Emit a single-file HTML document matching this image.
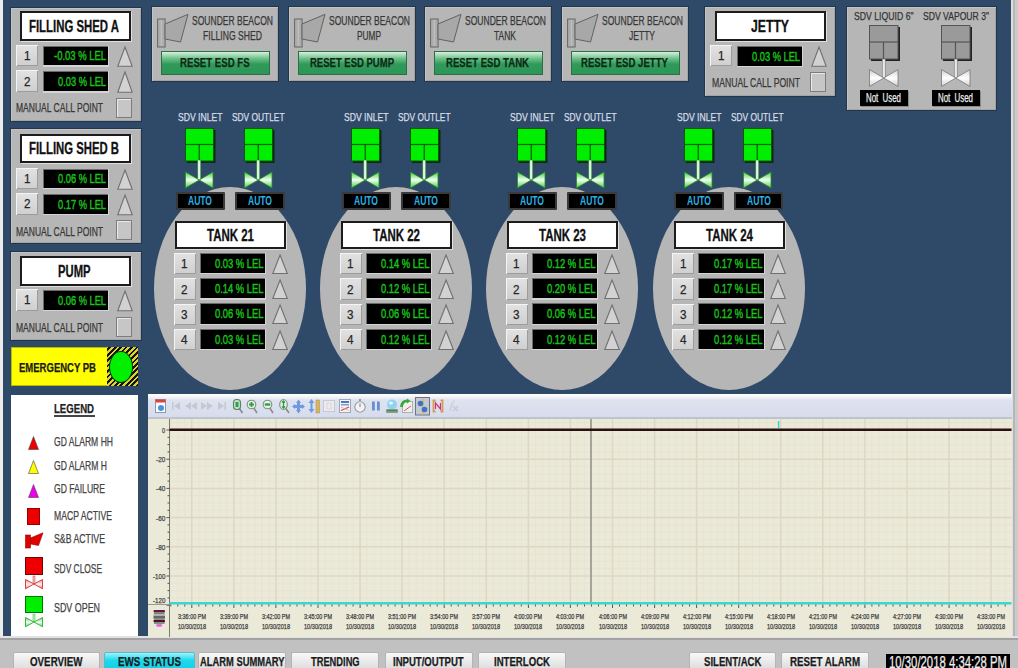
<!DOCTYPE html>
<html><head><meta charset="utf-8"><style>
html,body{margin:0;padding:0;}
body{width:1018px;height:668px;overflow:hidden;position:relative;background:#c1c1c1;font-family:"Liberation Sans",sans-serif;}
.a{position:absolute;}
.t{position:absolute;white-space:nowrap;text-align:left;overflow:visible;}
.t span{display:inline-block;transform-origin:0 50%;white-space:nowrap;}
.t{-webkit-text-stroke:0.25px currentColor;}
svg{overflow:visible;}
#wrap{position:absolute;left:0;top:0;width:1018px;height:668px;overflow:hidden;}
</style></head><body><div id="wrap">
<div class="a" style="left:0;top:0;width:3px;height:636px;background:#ececec"></div>
<div class="a" style="left:3.00px;top:0.00px;width:1008.00px;height:636.00px;background:#2f4968;"></div>
<div class="a" style="left:1011.00px;top:0.00px;width:7.00px;height:636.00px;background:linear-gradient(90deg,#dedede 0,#dedede 2px,#b6b6b6 2px,#b6b6b6 4px,#cbcbcb 4px);"></div>
<div class="a" style="left:0.00px;top:636.00px;width:1018.00px;height:32.00px;background:#c1c1c1;"></div>
<div class="a" style="left:0.00px;top:636.00px;width:1018.00px;height:2.00px;background:#e2e2e2;"></div>
<div class="a" style="left:0.00px;top:638.30px;width:1018.00px;height:1.70px;background:#a2a2a2;"></div>
<div class="a" style="left:10.00px;top:7.00px;width:132.00px;height:115.00px;background:#22354a;"></div>
<div class="a" style="left:11.00px;top:8.00px;width:130.00px;height:113.00px;background:#b6b6b6;box-shadow:inset 1px 1px 0 #c4c4c4, inset -1px -1px 0 #a4a4a4;"></div>
<div class="a" style="left:20.00px;top:11.00px;width:111.00px;height:29.50px;background:#fff;border:2px solid #1c1c1c;box-sizing:border-box;box-shadow:1px 1px 0 #e0e0e0;"></div>
<div class="t" style="left:29.00px;top:17.11px;width:90.00px;height:19.2px;line-height:19.2px;font-size:16px;font-weight:bold;color:#111;-webkit-text-stroke:0.3px #111;"><span style="transform:scaleX(0.7114)">FILLING SHED A</span></div>
<div class="a" style="left:16.00px;top:45.00px;width:22.00px;height:21.00px;background:linear-gradient(#e2e2e2,#cfcfcf);box-shadow:inset 1px 1px 0 #f4f4f4, inset -1px -1px 0 #9c9c9c;"></div>
<div class="t" style="left:23.75px;top:48.17px;width:6.50px;height:15.6px;line-height:15.6px;font-size:13px;font-weight:normal;color:#262626;"><span style="transform:scaleX(0.8990)">1</span></div>
<div class="a" style="left:43.00px;top:46.00px;width:66.00px;height:20.50px;background:#d4d4d4;"></div>
<div class="a" style="left:43.00px;top:46.00px;width:65.00px;height:19.00px;background:#000;box-shadow:inset 1px 1px 0 #6a6a6a;"></div>
<div class="t" style="left:54.00px;top:48.47px;width:52.00px;height:15.6px;line-height:15.6px;font-size:13px;font-weight:normal;color:#1ac21a;-webkit-text-stroke:0.45px #1ac21a;"><span style="transform:scaleX(0.7268)">-0.03 % LEL</span></div>
<svg class="a" style="left:117.00px;top:46.00px" width="16" height="21" viewBox="0 0 16 21"><polygon points="8.0,1 15.2,20.2 0.8,20.2" fill="#d2d2d2" stroke="#707070" stroke-width="1.1"/></svg>
<div class="a" style="left:16.00px;top:70.00px;width:22.00px;height:22.00px;background:linear-gradient(#e2e2e2,#cfcfcf);box-shadow:inset 1px 1px 0 #f4f4f4, inset -1px -1px 0 #9c9c9c;"></div>
<div class="t" style="left:23.75px;top:73.67px;width:6.50px;height:15.6px;line-height:15.6px;font-size:13px;font-weight:normal;color:#262626;"><span style="transform:scaleX(0.8990)">2</span></div>
<div class="a" style="left:43.00px;top:71.00px;width:66.00px;height:21.50px;background:#d4d4d4;"></div>
<div class="a" style="left:43.00px;top:71.00px;width:65.00px;height:20.00px;background:#000;box-shadow:inset 1px 1px 0 #6a6a6a;"></div>
<div class="t" style="left:58.00px;top:73.97px;width:48.00px;height:15.6px;line-height:15.6px;font-size:13px;font-weight:normal;color:#1ac21a;-webkit-text-stroke:0.45px #1ac21a;"><span style="transform:scaleX(0.7141)">0.03 % LEL</span></div>
<svg class="a" style="left:117.00px;top:71.00px" width="16" height="22" viewBox="0 0 16 22"><polygon points="8.0,1 15.2,21.2 0.8,21.2" fill="#d2d2d2" stroke="#707070" stroke-width="1.1"/></svg>
<div class="t" style="left:16.00px;top:101.27px;width:87.00px;height:14.4px;line-height:14.4px;font-size:12px;font-weight:normal;color:#363636;"><span style="transform:scaleX(0.7103)">MANUAL CALL POINT</span></div>
<div class="a" style="left:116.00px;top:98.00px;width:16.00px;height:20.00px;background:#c6c6c6;border:1px solid #7c7c7c;box-sizing:border-box;box-shadow:inset 1px 1px 0 #e8e8e8;"></div>
<div class="a" style="left:10.00px;top:128.00px;width:132.00px;height:116.00px;background:#22354a;"></div>
<div class="a" style="left:11.00px;top:129.00px;width:130.00px;height:114.00px;background:#b6b6b6;box-shadow:inset 1px 1px 0 #c4c4c4, inset -1px -1px 0 #a4a4a4;"></div>
<div class="a" style="left:20.00px;top:133.50px;width:111.00px;height:29.00px;background:#fff;border:2px solid #1c1c1c;box-sizing:border-box;box-shadow:1px 1px 0 #e0e0e0;"></div>
<div class="t" style="left:29.00px;top:139.36px;width:90.00px;height:19.2px;line-height:19.2px;font-size:16px;font-weight:bold;color:#111;-webkit-text-stroke:0.3px #111;"><span style="transform:scaleX(0.7080)">FILLING SHED B</span></div>
<div class="a" style="left:16.00px;top:167.50px;width:22.00px;height:21.00px;background:linear-gradient(#e2e2e2,#cfcfcf);box-shadow:inset 1px 1px 0 #f4f4f4, inset -1px -1px 0 #9c9c9c;"></div>
<div class="t" style="left:23.75px;top:170.67px;width:6.50px;height:15.6px;line-height:15.6px;font-size:13px;font-weight:normal;color:#262626;"><span style="transform:scaleX(0.8990)">1</span></div>
<div class="a" style="left:43.00px;top:168.50px;width:66.00px;height:20.50px;background:#d4d4d4;"></div>
<div class="a" style="left:43.00px;top:168.50px;width:65.00px;height:19.00px;background:#000;box-shadow:inset 1px 1px 0 #6a6a6a;"></div>
<div class="t" style="left:58.00px;top:170.97px;width:48.00px;height:15.6px;line-height:15.6px;font-size:13px;font-weight:normal;color:#1ac21a;-webkit-text-stroke:0.45px #1ac21a;"><span style="transform:scaleX(0.7141)">0.06 % LEL</span></div>
<svg class="a" style="left:117.00px;top:168.50px" width="16" height="21.0" viewBox="0 0 16 21.0"><polygon points="8.0,1 15.2,20.2 0.8,20.2" fill="#d2d2d2" stroke="#707070" stroke-width="1.1"/></svg>
<div class="a" style="left:16.00px;top:193.00px;width:22.00px;height:21.50px;background:linear-gradient(#e2e2e2,#cfcfcf);box-shadow:inset 1px 1px 0 #f4f4f4, inset -1px -1px 0 #9c9c9c;"></div>
<div class="t" style="left:23.75px;top:196.42px;width:6.50px;height:15.6px;line-height:15.6px;font-size:13px;font-weight:normal;color:#262626;"><span style="transform:scaleX(0.8990)">2</span></div>
<div class="a" style="left:43.00px;top:194.00px;width:66.00px;height:21.00px;background:#d4d4d4;"></div>
<div class="a" style="left:43.00px;top:194.00px;width:65.00px;height:19.50px;background:#000;box-shadow:inset 1px 1px 0 #6a6a6a;"></div>
<div class="t" style="left:58.00px;top:196.72px;width:48.00px;height:15.6px;line-height:15.6px;font-size:13px;font-weight:normal;color:#1ac21a;-webkit-text-stroke:0.45px #1ac21a;"><span style="transform:scaleX(0.7141)">0.17 % LEL</span></div>
<svg class="a" style="left:117.00px;top:194.00px" width="16" height="21.5" viewBox="0 0 16 21.5"><polygon points="8.0,1 15.2,20.7 0.8,20.7" fill="#d2d2d2" stroke="#707070" stroke-width="1.1"/></svg>
<div class="t" style="left:16.00px;top:224.77px;width:87.00px;height:14.4px;line-height:14.4px;font-size:12px;font-weight:normal;color:#363636;"><span style="transform:scaleX(0.7103)">MANUAL CALL POINT</span></div>
<div class="a" style="left:116.00px;top:220.00px;width:16.00px;height:20.00px;background:#c6c6c6;border:1px solid #7c7c7c;box-sizing:border-box;box-shadow:inset 1px 1px 0 #e8e8e8;"></div>
<div class="a" style="left:10.00px;top:251.00px;width:132.00px;height:89.50px;background:#22354a;"></div>
<div class="a" style="left:11.00px;top:252.00px;width:130.00px;height:87.50px;background:#b6b6b6;box-shadow:inset 1px 1px 0 #c4c4c4, inset -1px -1px 0 #a4a4a4;"></div>
<div class="a" style="left:20.00px;top:256.00px;width:111.00px;height:29.50px;background:#fff;border:2px solid #1c1c1c;box-sizing:border-box;box-shadow:1px 1px 0 #e0e0e0;"></div>
<div class="t" style="left:58.25px;top:262.11px;width:32.50px;height:19.2px;line-height:19.2px;font-size:16px;font-weight:bold;color:#111;-webkit-text-stroke:0.3px #111;"><span style="transform:scaleX(0.7030)">PUMP</span></div>
<div class="a" style="left:16.00px;top:289.00px;width:22.00px;height:21.50px;background:linear-gradient(#e2e2e2,#cfcfcf);box-shadow:inset 1px 1px 0 #f4f4f4, inset -1px -1px 0 #9c9c9c;"></div>
<div class="t" style="left:23.75px;top:292.42px;width:6.50px;height:15.6px;line-height:15.6px;font-size:13px;font-weight:normal;color:#262626;"><span style="transform:scaleX(0.8990)">1</span></div>
<div class="a" style="left:43.00px;top:290.00px;width:66.00px;height:21.00px;background:#d4d4d4;"></div>
<div class="a" style="left:43.00px;top:290.00px;width:65.00px;height:19.50px;background:#000;box-shadow:inset 1px 1px 0 #6a6a6a;"></div>
<div class="t" style="left:58.00px;top:292.72px;width:48.00px;height:15.6px;line-height:15.6px;font-size:13px;font-weight:normal;color:#1ac21a;-webkit-text-stroke:0.45px #1ac21a;"><span style="transform:scaleX(0.7141)">0.06 % LEL</span></div>
<svg class="a" style="left:117.00px;top:290.00px" width="16" height="21.5" viewBox="0 0 16 21.5"><polygon points="8.0,1 15.2,20.7 0.8,20.7" fill="#d2d2d2" stroke="#707070" stroke-width="1.1"/></svg>
<div class="t" style="left:16.00px;top:320.77px;width:87.00px;height:14.4px;line-height:14.4px;font-size:12px;font-weight:normal;color:#363636;"><span style="transform:scaleX(0.7103)">MANUAL CALL POINT</span></div>
<div class="a" style="left:116.00px;top:317.00px;width:16.00px;height:20.00px;background:#c6c6c6;border:1px solid #7c7c7c;box-sizing:border-box;box-shadow:inset 1px 1px 0 #e8e8e8;"></div>
<div class="a" style="left:11.00px;top:347.40px;width:127.00px;height:38.90px;background:#ffff00;box-shadow:inset 0 0 0 1px #b8b800;"></div>
<div class="a" style="left:106.70px;top:347.40px;width:31.30px;height:38.90px;background:repeating-linear-gradient(-45deg,#141414 0,#141414 1.9px,#dcd428 1.9px,#dcd428 3.85px);"></div>
<div class="a" style="left:110.2px;top:351.7px;width:21.8px;height:30.3px;border-radius:50%;background:#00f000;box-shadow:0 0 0 1px #0a3a0a;"></div>
<div class="t" style="left:18.70px;top:359.97px;width:77.00px;height:15.6px;line-height:15.6px;font-size:13px;font-weight:bold;color:#1a1a1a;"><span style="transform:scaleX(0.7317)">EMERGENCY PB</span></div>
<div class="a" style="left:11.00px;top:395.00px;width:126.50px;height:241.00px;background:#fff;"></div>
<div class="t" style="left:54.00px;top:402.27px;width:40.00px;height:14.4px;line-height:14.4px;font-size:12px;font-weight:bold;color:#222;"><span style="transform:scaleX(0.7999)">LEGEND</span></div>
<div class="a" style="left:54.00px;top:415.00px;width:40.50px;height:1.50px;background:#444;"></div>
<div class="t" style="left:54.00px;top:435.27px;width:59.00px;height:14.4px;line-height:14.4px;font-size:12px;font-weight:normal;color:#444;"><span style="transform:scaleX(0.7136)">GD ALARM HH</span></div>
<div class="t" style="left:54.00px;top:459.27px;width:53.00px;height:14.4px;line-height:14.4px;font-size:12px;font-weight:normal;color:#444;"><span style="transform:scaleX(0.7160)">GD ALARM H</span></div>
<div class="t" style="left:54.00px;top:482.27px;width:51.00px;height:14.4px;line-height:14.4px;font-size:12px;font-weight:normal;color:#444;"><span style="transform:scaleX(0.7148)">GD FAILURE</span></div>
<div class="t" style="left:54.00px;top:509.27px;width:58.00px;height:14.4px;line-height:14.4px;font-size:12px;font-weight:normal;color:#444;"><span style="transform:scaleX(0.7208)">MACP ACTIVE</span></div>
<div class="t" style="left:54.00px;top:531.77px;width:51.00px;height:14.4px;line-height:14.4px;font-size:12px;font-weight:normal;color:#444;"><span style="transform:scaleX(0.7283)">S&amp;B ACTIVE</span></div>
<div class="t" style="left:54.00px;top:562.27px;width:48.00px;height:14.4px;line-height:14.4px;font-size:12px;font-weight:normal;color:#444;"><span style="transform:scaleX(0.6988)">SDV CLOSE</span></div>
<div class="t" style="left:54.00px;top:600.77px;width:46.00px;height:14.4px;line-height:14.4px;font-size:12px;font-weight:normal;color:#444;"><span style="transform:scaleX(0.7417)">SDV OPEN</span></div>
<svg class="a" style="left:28.00px;top:436.00px" width="11" height="14" viewBox="0 0 11 14"><polygon points="5.5,0.5 10.5,13.5 0.5,13.5" fill="#ee0000" stroke="#444" stroke-width="0.6"/></svg>
<svg class="a" style="left:28.00px;top:460.00px" width="11" height="14" viewBox="0 0 11 14"><polygon points="5.5,0.5 10.5,13.5 0.5,13.5" fill="#ffff00" stroke="#444" stroke-width="0.6"/></svg>
<svg class="a" style="left:28.00px;top:483.50px" width="11" height="14" viewBox="0 0 11 14"><polygon points="5.5,0.5 10.5,13.5 0.5,13.5" fill="#ee00ee" stroke="#444" stroke-width="0.6"/></svg>
<div class="a" style="left:27.20px;top:508.00px;width:12.60px;height:16.50px;background:#ee0000;border:1px solid #900;box-sizing:border-box;"></div>
<svg class="a" style="left:25.00px;top:532.00px" width="19" height="17" viewBox="0 0 19 17"><rect x="0.5" y="3" width="5" height="13" fill="#e00000" stroke="#900" stroke-width="0.6"/><polygon points="5.5,6 18,0.8 13.5,13.5 5.5,12" fill="#e00000" stroke="#900" stroke-width="0.6"/></svg>
<div class="a" style="left:25.20px;top:557.40px;width:17.60px;height:18.10px;background:#ee0000;border:1px solid #700;box-sizing:border-box;"></div>
<svg class="a" style="left:25.00px;top:576.00px" width="18" height="14" viewBox="0 0 18 14"><defs><linearGradient id="lgr" x1="0" y1="0" x2="0" y2="1"><stop offset="0" stop-color="#f08080"/><stop offset="0.5" stop-color="#fff0f0"/><stop offset="1" stop-color="#f08080"/></linearGradient></defs><rect x="8" y="0" width="2" height="8" fill="#f0c0c0" stroke="#d04040" stroke-width="0.5"/><polygon points="0.5,3.5 9,8 0.5,12.8" fill="url(#lgr)" stroke="#d83030" stroke-width="0.9"/><polygon points="17.5,3.5 9,8 17.5,12.8" fill="url(#lgr)" stroke="#d83030" stroke-width="0.9"/></svg>
<div class="a" style="left:25.20px;top:595.70px;width:17.60px;height:17.80px;background:#00ee00;border:1px solid #070;box-sizing:border-box;"></div>
<svg class="a" style="left:25.00px;top:614.00px" width="18" height="14" viewBox="0 0 18 14"><defs><linearGradient id="lgg" x1="0" y1="0" x2="0" y2="1"><stop offset="0" stop-color="#60d060"/><stop offset="0.5" stop-color="#f0fff0"/><stop offset="1" stop-color="#60d060"/></linearGradient></defs><rect x="8" y="0" width="2" height="8" fill="#c0f0c0" stroke="#40b040" stroke-width="0.5"/><polygon points="0.5,3.5 9,8 0.5,12.8" fill="url(#lgg)" stroke="#30b030" stroke-width="0.9"/><polygon points="17.5,3.5 9,8 17.5,12.8" fill="url(#lgg)" stroke="#30b030" stroke-width="0.9"/></svg>
<div class="a" style="left:151.00px;top:5.50px;width:127.50px;height:76.50px;background:#22354a;"></div>
<div class="a" style="left:152.00px;top:6.50px;width:125.50px;height:74.50px;background:#b6b6b6;box-shadow:inset 1px 1px 0 #c4c4c4, inset -1px -1px 0 #a4a4a4;"></div>
<svg class="a" style="left:157.00px;top:13.00px" width="33" height="36" viewBox="0 0 33 36"><rect x="0.6" y="6" width="7.5" height="28" fill="#adadad" stroke="#666" stroke-width="1"/><line x1="4.3" y1="7" x2="4.3" y2="33" stroke="#c4c4c4" stroke-width="1"/><polygon points="8,11 31,1.3 23.5,29 8,26" fill="#a8a8a8" stroke="#626262" stroke-width="1"/></svg>
<div class="t" style="left:192.00px;top:14.27px;width:81.00px;height:14.4px;line-height:14.4px;font-size:12px;font-weight:normal;color:#363636;"><span style="transform:scaleX(0.7104)">SOUNDER BEACON</span></div>
<div class="t" style="left:202.80px;top:28.57px;width:59.00px;height:14.4px;line-height:14.4px;font-size:12px;font-weight:normal;color:#363636;"><span style="transform:scaleX(0.7193)">FILLING SHED</span></div>
<div class="a" style="left:161.40px;top:51.30px;width:109.00px;height:23.50px;background:linear-gradient(#d8f0dc 0%,#6cc08a 30%,#2f9a5a 55%,#2c9658 100%);border:1px solid #2d6e45;box-sizing:border-box;"></div>
<div class="t" style="left:179.85px;top:54.97px;width:69.70px;height:15.6px;line-height:15.6px;font-size:13px;font-weight:bold;color:#0e2a16;"><span style="transform:scaleX(0.7422)">RESET ESD FS</span></div>
<div class="a" style="left:288.00px;top:5.50px;width:127.50px;height:76.50px;background:#22354a;"></div>
<div class="a" style="left:289.00px;top:6.50px;width:125.50px;height:74.50px;background:#b6b6b6;box-shadow:inset 1px 1px 0 #c4c4c4, inset -1px -1px 0 #a4a4a4;"></div>
<svg class="a" style="left:294.00px;top:13.00px" width="33" height="36" viewBox="0 0 33 36"><rect x="0.6" y="6" width="7.5" height="28" fill="#adadad" stroke="#666" stroke-width="1"/><line x1="4.3" y1="7" x2="4.3" y2="33" stroke="#c4c4c4" stroke-width="1"/><polygon points="8,11 31,1.3 23.5,29 8,26" fill="#a8a8a8" stroke="#626262" stroke-width="1"/></svg>
<div class="t" style="left:329.00px;top:14.27px;width:81.00px;height:14.4px;line-height:14.4px;font-size:12px;font-weight:normal;color:#363636;"><span style="transform:scaleX(0.7104)">SOUNDER BEACON</span></div>
<div class="t" style="left:356.50px;top:28.57px;width:24.00px;height:14.4px;line-height:14.4px;font-size:12px;font-weight:normal;color:#363636;"><span style="transform:scaleX(0.6922)">PUMP</span></div>
<div class="a" style="left:298.40px;top:51.30px;width:109.00px;height:23.50px;background:linear-gradient(#d8f0dc 0%,#6cc08a 30%,#2f9a5a 55%,#2c9658 100%);border:1px solid #2d6e45;box-sizing:border-box;"></div>
<div class="t" style="left:309.70px;top:54.97px;width:84.00px;height:15.6px;line-height:15.6px;font-size:13px;font-weight:bold;color:#0e2a16;"><span style="transform:scaleX(0.7313)">RESET ESD PUMP</span></div>
<div class="a" style="left:424.00px;top:5.50px;width:127.50px;height:76.50px;background:#22354a;"></div>
<div class="a" style="left:425.00px;top:6.50px;width:125.50px;height:74.50px;background:#b6b6b6;box-shadow:inset 1px 1px 0 #c4c4c4, inset -1px -1px 0 #a4a4a4;"></div>
<svg class="a" style="left:430.00px;top:13.00px" width="33" height="36" viewBox="0 0 33 36"><rect x="0.6" y="6" width="7.5" height="28" fill="#adadad" stroke="#666" stroke-width="1"/><line x1="4.3" y1="7" x2="4.3" y2="33" stroke="#c4c4c4" stroke-width="1"/><polygon points="8,11 31,1.3 23.5,29 8,26" fill="#a8a8a8" stroke="#626262" stroke-width="1"/></svg>
<div class="t" style="left:465.00px;top:14.27px;width:81.00px;height:14.4px;line-height:14.4px;font-size:12px;font-weight:normal;color:#363636;"><span style="transform:scaleX(0.7104)">SOUNDER BEACON</span></div>
<div class="t" style="left:494.30px;top:28.57px;width:22.00px;height:14.4px;line-height:14.4px;font-size:12px;font-weight:normal;color:#363636;"><span style="transform:scaleX(0.7071)">TANK</span></div>
<div class="a" style="left:434.40px;top:51.30px;width:109.00px;height:23.50px;background:linear-gradient(#d8f0dc 0%,#6cc08a 30%,#2f9a5a 55%,#2c9658 100%);border:1px solid #2d6e45;box-sizing:border-box;"></div>
<div class="t" style="left:446.20px;top:54.97px;width:83.00px;height:15.6px;line-height:15.6px;font-size:13px;font-weight:bold;color:#0e2a16;"><span style="transform:scaleX(0.7382)">RESET ESD TANK</span></div>
<div class="a" style="left:561.00px;top:5.50px;width:127.50px;height:76.50px;background:#22354a;"></div>
<div class="a" style="left:562.00px;top:6.50px;width:125.50px;height:74.50px;background:#b6b6b6;box-shadow:inset 1px 1px 0 #c4c4c4, inset -1px -1px 0 #a4a4a4;"></div>
<svg class="a" style="left:567.00px;top:13.00px" width="33" height="36" viewBox="0 0 33 36"><rect x="0.6" y="6" width="7.5" height="28" fill="#adadad" stroke="#666" stroke-width="1"/><line x1="4.3" y1="7" x2="4.3" y2="33" stroke="#c4c4c4" stroke-width="1"/><polygon points="8,11 31,1.3 23.5,29 8,26" fill="#a8a8a8" stroke="#626262" stroke-width="1"/></svg>
<div class="t" style="left:602.00px;top:14.27px;width:81.00px;height:14.4px;line-height:14.4px;font-size:12px;font-weight:normal;color:#363636;"><span style="transform:scaleX(0.7104)">SOUNDER BEACON</span></div>
<div class="t" style="left:628.50px;top:28.57px;width:26.00px;height:14.4px;line-height:14.4px;font-size:12px;font-weight:normal;color:#363636;"><span style="transform:scaleX(0.7090)">JETTY</span></div>
<div class="a" style="left:571.40px;top:51.30px;width:109.00px;height:23.50px;background:linear-gradient(#d8f0dc 0%,#6cc08a 30%,#2f9a5a 55%,#2c9658 100%);border:1px solid #2d6e45;box-sizing:border-box;"></div>
<div class="t" style="left:581.20px;top:54.97px;width:87.00px;height:15.6px;line-height:15.6px;font-size:13px;font-weight:bold;color:#0e2a16;"><span style="transform:scaleX(0.7388)">RESET ESD JETTY</span></div>
<div class="a" style="left:704.00px;top:6.00px;width:132.00px;height:90.50px;background:#22354a;"></div>
<div class="a" style="left:705.00px;top:7.00px;width:130.00px;height:88.50px;background:#b6b6b6;box-shadow:inset 1px 1px 0 #c4c4c4, inset -1px -1px 0 #a4a4a4;"></div>
<div class="a" style="left:714.50px;top:11.00px;width:111.00px;height:29.50px;background:#fff;border:2px solid #1c1c1c;box-sizing:border-box;box-shadow:1px 1px 0 #e0e0e0;"></div>
<div class="t" style="left:751.00px;top:17.11px;width:38.00px;height:19.2px;line-height:19.2px;font-size:16px;font-weight:bold;color:#111;-webkit-text-stroke:0.3px #111;"><span style="transform:scaleX(0.7632)">JETTY</span></div>
<div class="a" style="left:710.00px;top:44.80px;width:22.00px;height:21.40px;background:linear-gradient(#e2e2e2,#cfcfcf);box-shadow:inset 1px 1px 0 #f4f4f4, inset -1px -1px 0 #9c9c9c;"></div>
<div class="t" style="left:717.75px;top:48.17px;width:6.50px;height:15.6px;line-height:15.6px;font-size:13px;font-weight:normal;color:#262626;"><span style="transform:scaleX(0.8990)">1</span></div>
<div class="a" style="left:737.00px;top:46.00px;width:66.00px;height:21.00px;background:#d4d4d4;"></div>
<div class="a" style="left:737.00px;top:46.00px;width:65.00px;height:19.50px;background:#000;box-shadow:inset 1px 1px 0 #6a6a6a;"></div>
<div class="t" style="left:752.00px;top:48.72px;width:48.00px;height:15.6px;line-height:15.6px;font-size:13px;font-weight:normal;color:#1ac21a;-webkit-text-stroke:0.45px #1ac21a;"><span style="transform:scaleX(0.7141)">0.03 % LEL</span></div>
<svg class="a" style="left:811.00px;top:46.00px" width="16" height="21" viewBox="0 0 16 21"><polygon points="8.0,1 15.2,20.2 0.8,20.2" fill="#d2d2d2" stroke="#707070" stroke-width="1.1"/></svg>
<div class="t" style="left:711.50px;top:75.77px;width:88.00px;height:14.4px;line-height:14.4px;font-size:12px;font-weight:normal;color:#363636;"><span style="transform:scaleX(0.7185)">MANUAL CALL POINT</span></div>
<div class="a" style="left:810.00px;top:71.50px;width:16.00px;height:20.00px;background:#c6c6c6;border:1px solid #7c7c7c;box-sizing:border-box;box-shadow:inset 1px 1px 0 #e8e8e8;"></div>
<div class="a" style="left:846.00px;top:6.00px;width:151.00px;height:105.00px;background:#22354a;"></div>
<div class="a" style="left:847.00px;top:7.00px;width:149.00px;height:103.00px;background:#b6b6b6;box-shadow:inset 1px 1px 0 #c4c4c4, inset -1px -1px 0 #a4a4a4;"></div>
<div class="t" style="left:854.20px;top:9.97px;width:59.60px;height:13.8px;line-height:13.8px;font-size:11.5px;font-weight:normal;color:#333;"><span style="transform:scaleX(0.7558)">SDV LIQUID 6"</span></div>
<div class="t" style="left:923.00px;top:9.97px;width:66.00px;height:13.8px;line-height:13.8px;font-size:11.5px;font-weight:normal;color:#333;"><span style="transform:scaleX(0.7481)">SDV VAPOUR 3"</span></div>
<svg class="a" style="left:868.50px;top:24.50px" width="31" height="36" viewBox="0 0 31 36"><rect x="2" y="2" width="29" height="34" fill="#222"/><rect x="0.5" y="0.5" width="28.5" height="33.5" fill="#9a9a9a" stroke="#555" stroke-width="1"/><line x1="0.5" y1="17.0" x2="29" y2="17.0" stroke="#555" stroke-width="1.2"/><line x1="14.5" y1="17.0" x2="14.5" y2="34" stroke="#555" stroke-width="1.2"/></svg>
<svg class="a" style="left:868.50px;top:58.50px" width="29.5" height="28" viewBox="0 0 29.5 28"><defs><linearGradient id="g8685585" x1="0" y1="0" x2="0" y2="1"><stop offset="0" stop-color="#d0d0d0"/><stop offset="0.5" stop-color="#ffffff"/><stop offset="1" stop-color="#d0d0d0"/></linearGradient></defs><rect x="13.25" y="0" width="3" height="19.0" fill="#e8e8e8" stroke="#777" stroke-width="0.6"/><polygon points="0.5,10.5 14.75,19.0 0.5,27.5" fill="url(#g8685585)" stroke="#777" stroke-width="0.8"/><polygon points="29.0,10.5 14.75,19.0 29.0,27.5" fill="url(#g8685585)" stroke="#777" stroke-width="0.8"/></svg>
<div class="a" style="left:859.50px;top:89.80px;width:48.00px;height:16.20px;background:#000;box-shadow:1px 1px 0 #888;"></div>
<div class="t" style="left:866.00px;top:91.27px;width:35.00px;height:14.4px;line-height:14.4px;font-size:12px;font-weight:normal;color:#f0f0f0;"><span style="transform:scaleX(0.6560)">Not&nbsp; Used</span></div>
<svg class="a" style="left:940.50px;top:24.50px" width="31" height="36" viewBox="0 0 31 36"><rect x="2" y="2" width="29" height="34" fill="#222"/><rect x="0.5" y="0.5" width="28.5" height="33.5" fill="#9a9a9a" stroke="#555" stroke-width="1"/><line x1="0.5" y1="17.0" x2="29" y2="17.0" stroke="#555" stroke-width="1.2"/><line x1="14.5" y1="17.0" x2="14.5" y2="34" stroke="#555" stroke-width="1.2"/></svg>
<svg class="a" style="left:940.50px;top:58.50px" width="29.5" height="28" viewBox="0 0 29.5 28"><defs><linearGradient id="g9405585" x1="0" y1="0" x2="0" y2="1"><stop offset="0" stop-color="#d0d0d0"/><stop offset="0.5" stop-color="#ffffff"/><stop offset="1" stop-color="#d0d0d0"/></linearGradient></defs><rect x="13.25" y="0" width="3" height="19.0" fill="#e8e8e8" stroke="#777" stroke-width="0.6"/><polygon points="0.5,10.5 14.75,19.0 0.5,27.5" fill="url(#g9405585)" stroke="#777" stroke-width="0.8"/><polygon points="29.0,10.5 14.75,19.0 29.0,27.5" fill="url(#g9405585)" stroke="#777" stroke-width="0.8"/></svg>
<div class="a" style="left:931.50px;top:89.80px;width:48.00px;height:16.20px;background:#000;box-shadow:1px 1px 0 #888;"></div>
<div class="t" style="left:938.00px;top:91.27px;width:35.00px;height:14.4px;line-height:14.4px;font-size:12px;font-weight:normal;color:#f0f0f0;"><span style="transform:scaleX(0.6560)">Not&nbsp; Used</span></div>
<div class="a" style="left:154.00px;top:186.5px;width:152px;height:203.5px;border-radius:50%;background:#b6b6b6;"></div>
<div class="t" style="left:178.25px;top:111.07px;width:44.50px;height:13.8px;line-height:13.8px;font-size:11.5px;font-weight:normal;color:#d8dee6;"><span style="transform:scaleX(0.7487)">SDV INLET</span></div>
<div class="t" style="left:232.25px;top:111.07px;width:52.50px;height:13.8px;line-height:13.8px;font-size:11.5px;font-weight:normal;color:#d8dee6;"><span style="transform:scaleX(0.7271)">SDV OUTLET</span></div>
<svg class="a" style="left:185.40px;top:128.40px" width="30.5" height="35" viewBox="0 0 30.5 35"><rect x="2" y="2" width="28.5" height="33" fill="#0c2a10"/><rect x="0.5" y="0.5" width="28.0" height="32.5" fill="#00ee00" stroke="#0a5a0a" stroke-width="1"/><line x1="0.5" y1="16.5" x2="28.5" y2="16.5" stroke="#0a5a0a" stroke-width="1.2"/><line x1="14.25" y1="16.5" x2="14.25" y2="33" stroke="#0a5a0a" stroke-width="1.2"/></svg>
<svg class="a" style="left:185.40px;top:160.00px" width="28.5" height="28.5" viewBox="0 0 28.5 28.5"><defs><linearGradient id="g18541600" x1="0" y1="0" x2="0" y2="1"><stop offset="0" stop-color="#40d040"/><stop offset="0.5" stop-color="#f0fff0"/><stop offset="1" stop-color="#40d040"/></linearGradient></defs><rect x="12.75" y="0" width="3" height="20.0" fill="#e0f5e0" stroke="#2a8a2a" stroke-width="0.6"/><polygon points="0.5,12.0 14.25,20.0 0.5,28.0" fill="url(#g18541600)" stroke="#2a8a2a" stroke-width="0.8"/><polygon points="28.0,12.0 14.25,20.0 28.0,28.0" fill="url(#g18541600)" stroke="#2a8a2a" stroke-width="0.8"/></svg>
<svg class="a" style="left:244.40px;top:128.40px" width="30.5" height="35" viewBox="0 0 30.5 35"><rect x="2" y="2" width="28.5" height="33" fill="#0c2a10"/><rect x="0.5" y="0.5" width="28.0" height="32.5" fill="#00ee00" stroke="#0a5a0a" stroke-width="1"/><line x1="0.5" y1="16.5" x2="28.5" y2="16.5" stroke="#0a5a0a" stroke-width="1.2"/><line x1="14.25" y1="16.5" x2="14.25" y2="33" stroke="#0a5a0a" stroke-width="1.2"/></svg>
<svg class="a" style="left:244.40px;top:160.00px" width="28.5" height="28.5" viewBox="0 0 28.5 28.5"><defs><linearGradient id="g24441600" x1="0" y1="0" x2="0" y2="1"><stop offset="0" stop-color="#40d040"/><stop offset="0.5" stop-color="#f0fff0"/><stop offset="1" stop-color="#40d040"/></linearGradient></defs><rect x="12.75" y="0" width="3" height="20.0" fill="#e0f5e0" stroke="#2a8a2a" stroke-width="0.6"/><polygon points="0.5,12.0 14.25,20.0 0.5,28.0" fill="url(#g24441600)" stroke="#2a8a2a" stroke-width="0.8"/><polygon points="28.0,12.0 14.25,20.0 28.0,28.0" fill="url(#g24441600)" stroke="#2a8a2a" stroke-width="0.8"/></svg>
<div class="a" style="left:175.70px;top:191.60px;width:49.30px;height:18.40px;background:#000;border:2px solid #3a3a3a;box-sizing:border-box;border-radius:1px;"></div>
<div class="t" style="left:188.30px;top:194.27px;width:24.00px;height:14.4px;line-height:14.4px;font-size:12px;font-weight:bold;color:#2ab0e6;-webkit-text-stroke:0;"><span style="transform:scaleX(0.7105)">AUTO</span></div>
<div class="a" style="left:235.30px;top:191.60px;width:49.30px;height:18.40px;background:#000;border:2px solid #3a3a3a;box-sizing:border-box;border-radius:1px;"></div>
<div class="t" style="left:247.90px;top:194.27px;width:24.00px;height:14.4px;line-height:14.4px;font-size:12px;font-weight:bold;color:#2ab0e6;-webkit-text-stroke:0;"><span style="transform:scaleX(0.7105)">AUTO</span></div>
<div class="a" style="left:175.00px;top:220.50px;width:111.00px;height:28.50px;background:#fff;border:2px solid #1c1c1c;box-sizing:border-box;box-shadow:1px 1px 0 #e0e0e0;"></div>
<div class="t" style="left:207.00px;top:226.11px;width:47.00px;height:19.2px;line-height:19.2px;font-size:16px;font-weight:bold;color:#111;-webkit-text-stroke:0.3px #111;"><span style="transform:scaleX(0.7176)">TANK 21</span></div>
<div class="a" style="left:173.50px;top:253.00px;width:22.20px;height:21.30px;background:linear-gradient(#e2e2e2,#cfcfcf);box-shadow:inset 1px 1px 0 #f4f4f4, inset -1px -1px 0 #9c9c9c;"></div>
<div class="t" style="left:181.35px;top:256.32px;width:6.50px;height:15.6px;line-height:15.6px;font-size:13px;font-weight:normal;color:#262626;"><span style="transform:scaleX(0.8990)">1</span></div>
<div class="a" style="left:199.80px;top:252.80px;width:66.70px;height:21.70px;background:#d4d4d4;"></div>
<div class="a" style="left:199.80px;top:252.80px;width:65.70px;height:20.20px;background:#000;box-shadow:inset 1px 1px 0 #6a6a6a;"></div>
<div class="t" style="left:215.00px;top:255.87px;width:48.50px;height:15.6px;line-height:15.6px;font-size:13px;font-weight:normal;color:#1ac21a;-webkit-text-stroke:0.45px #1ac21a;"><span style="transform:scaleX(0.7216)">0.03 % LEL</span></div>
<svg class="a" style="left:271.80px;top:253.70px" width="16.099999999999966" height="20.30000000000001" viewBox="0 0 16.099999999999966 20.30000000000001"><polygon points="8.049999999999983,1 15.299999999999965,19.50000000000001 0.8,19.50000000000001" fill="#d2d2d2" stroke="#707070" stroke-width="1.1"/></svg>
<div class="a" style="left:173.50px;top:278.30px;width:22.20px;height:21.30px;background:linear-gradient(#e2e2e2,#cfcfcf);box-shadow:inset 1px 1px 0 #f4f4f4, inset -1px -1px 0 #9c9c9c;"></div>
<div class="t" style="left:181.35px;top:281.62px;width:6.50px;height:15.6px;line-height:15.6px;font-size:13px;font-weight:normal;color:#262626;"><span style="transform:scaleX(0.8990)">2</span></div>
<div class="a" style="left:199.80px;top:278.10px;width:66.70px;height:21.70px;background:#d4d4d4;"></div>
<div class="a" style="left:199.80px;top:278.10px;width:65.70px;height:20.20px;background:#000;box-shadow:inset 1px 1px 0 #6a6a6a;"></div>
<div class="t" style="left:215.00px;top:281.17px;width:48.50px;height:15.6px;line-height:15.6px;font-size:13px;font-weight:normal;color:#1ac21a;-webkit-text-stroke:0.45px #1ac21a;"><span style="transform:scaleX(0.7216)">0.14 % LEL</span></div>
<svg class="a" style="left:271.80px;top:279.00px" width="16.099999999999966" height="20.30000000000001" viewBox="0 0 16.099999999999966 20.30000000000001"><polygon points="8.049999999999983,1 15.299999999999965,19.50000000000001 0.8,19.50000000000001" fill="#d2d2d2" stroke="#707070" stroke-width="1.1"/></svg>
<div class="a" style="left:173.50px;top:303.60px;width:22.20px;height:21.30px;background:linear-gradient(#e2e2e2,#cfcfcf);box-shadow:inset 1px 1px 0 #f4f4f4, inset -1px -1px 0 #9c9c9c;"></div>
<div class="t" style="left:181.35px;top:306.92px;width:6.50px;height:15.6px;line-height:15.6px;font-size:13px;font-weight:normal;color:#262626;"><span style="transform:scaleX(0.8990)">3</span></div>
<div class="a" style="left:199.80px;top:303.40px;width:66.70px;height:21.70px;background:#d4d4d4;"></div>
<div class="a" style="left:199.80px;top:303.40px;width:65.70px;height:20.20px;background:#000;box-shadow:inset 1px 1px 0 #6a6a6a;"></div>
<div class="t" style="left:215.00px;top:306.47px;width:48.50px;height:15.6px;line-height:15.6px;font-size:13px;font-weight:normal;color:#1ac21a;-webkit-text-stroke:0.45px #1ac21a;"><span style="transform:scaleX(0.7216)">0.06 % LEL</span></div>
<svg class="a" style="left:271.80px;top:304.30px" width="16.099999999999966" height="20.30000000000001" viewBox="0 0 16.099999999999966 20.30000000000001"><polygon points="8.049999999999983,1 15.299999999999965,19.50000000000001 0.8,19.50000000000001" fill="#d2d2d2" stroke="#707070" stroke-width="1.1"/></svg>
<div class="a" style="left:173.50px;top:328.90px;width:22.20px;height:21.30px;background:linear-gradient(#e2e2e2,#cfcfcf);box-shadow:inset 1px 1px 0 #f4f4f4, inset -1px -1px 0 #9c9c9c;"></div>
<div class="t" style="left:181.35px;top:332.22px;width:6.50px;height:15.6px;line-height:15.6px;font-size:13px;font-weight:normal;color:#262626;"><span style="transform:scaleX(0.8990)">4</span></div>
<div class="a" style="left:199.80px;top:328.70px;width:66.70px;height:21.70px;background:#d4d4d4;"></div>
<div class="a" style="left:199.80px;top:328.70px;width:65.70px;height:20.20px;background:#000;box-shadow:inset 1px 1px 0 #6a6a6a;"></div>
<div class="t" style="left:215.00px;top:331.77px;width:48.50px;height:15.6px;line-height:15.6px;font-size:13px;font-weight:normal;color:#1ac21a;-webkit-text-stroke:0.45px #1ac21a;"><span style="transform:scaleX(0.7216)">0.03 % LEL</span></div>
<svg class="a" style="left:271.80px;top:329.60px" width="16.099999999999966" height="20.30000000000001" viewBox="0 0 16.099999999999966 20.30000000000001"><polygon points="8.049999999999983,1 15.299999999999965,19.50000000000001 0.8,19.50000000000001" fill="#d2d2d2" stroke="#707070" stroke-width="1.1"/></svg>
<div class="a" style="left:320.00px;top:186.5px;width:152px;height:203.5px;border-radius:50%;background:#b6b6b6;"></div>
<div class="t" style="left:344.25px;top:111.07px;width:44.50px;height:13.8px;line-height:13.8px;font-size:11.5px;font-weight:normal;color:#d8dee6;"><span style="transform:scaleX(0.7487)">SDV INLET</span></div>
<div class="t" style="left:398.25px;top:111.07px;width:52.50px;height:13.8px;line-height:13.8px;font-size:11.5px;font-weight:normal;color:#d8dee6;"><span style="transform:scaleX(0.7271)">SDV OUTLET</span></div>
<svg class="a" style="left:351.40px;top:128.40px" width="30.5" height="35" viewBox="0 0 30.5 35"><rect x="2" y="2" width="28.5" height="33" fill="#0c2a10"/><rect x="0.5" y="0.5" width="28.0" height="32.5" fill="#00ee00" stroke="#0a5a0a" stroke-width="1"/><line x1="0.5" y1="16.5" x2="28.5" y2="16.5" stroke="#0a5a0a" stroke-width="1.2"/><line x1="14.25" y1="16.5" x2="14.25" y2="33" stroke="#0a5a0a" stroke-width="1.2"/></svg>
<svg class="a" style="left:351.40px;top:160.00px" width="28.5" height="28.5" viewBox="0 0 28.5 28.5"><defs><linearGradient id="g35141600" x1="0" y1="0" x2="0" y2="1"><stop offset="0" stop-color="#40d040"/><stop offset="0.5" stop-color="#f0fff0"/><stop offset="1" stop-color="#40d040"/></linearGradient></defs><rect x="12.75" y="0" width="3" height="20.0" fill="#e0f5e0" stroke="#2a8a2a" stroke-width="0.6"/><polygon points="0.5,12.0 14.25,20.0 0.5,28.0" fill="url(#g35141600)" stroke="#2a8a2a" stroke-width="0.8"/><polygon points="28.0,12.0 14.25,20.0 28.0,28.0" fill="url(#g35141600)" stroke="#2a8a2a" stroke-width="0.8"/></svg>
<svg class="a" style="left:410.40px;top:128.40px" width="30.5" height="35" viewBox="0 0 30.5 35"><rect x="2" y="2" width="28.5" height="33" fill="#0c2a10"/><rect x="0.5" y="0.5" width="28.0" height="32.5" fill="#00ee00" stroke="#0a5a0a" stroke-width="1"/><line x1="0.5" y1="16.5" x2="28.5" y2="16.5" stroke="#0a5a0a" stroke-width="1.2"/><line x1="14.25" y1="16.5" x2="14.25" y2="33" stroke="#0a5a0a" stroke-width="1.2"/></svg>
<svg class="a" style="left:410.40px;top:160.00px" width="28.5" height="28.5" viewBox="0 0 28.5 28.5"><defs><linearGradient id="g41041600" x1="0" y1="0" x2="0" y2="1"><stop offset="0" stop-color="#40d040"/><stop offset="0.5" stop-color="#f0fff0"/><stop offset="1" stop-color="#40d040"/></linearGradient></defs><rect x="12.75" y="0" width="3" height="20.0" fill="#e0f5e0" stroke="#2a8a2a" stroke-width="0.6"/><polygon points="0.5,12.0 14.25,20.0 0.5,28.0" fill="url(#g41041600)" stroke="#2a8a2a" stroke-width="0.8"/><polygon points="28.0,12.0 14.25,20.0 28.0,28.0" fill="url(#g41041600)" stroke="#2a8a2a" stroke-width="0.8"/></svg>
<div class="a" style="left:341.70px;top:191.60px;width:49.30px;height:18.40px;background:#000;border:2px solid #3a3a3a;box-sizing:border-box;border-radius:1px;"></div>
<div class="t" style="left:354.30px;top:194.27px;width:24.00px;height:14.4px;line-height:14.4px;font-size:12px;font-weight:bold;color:#2ab0e6;-webkit-text-stroke:0;"><span style="transform:scaleX(0.7105)">AUTO</span></div>
<div class="a" style="left:401.30px;top:191.60px;width:49.30px;height:18.40px;background:#000;border:2px solid #3a3a3a;box-sizing:border-box;border-radius:1px;"></div>
<div class="t" style="left:413.90px;top:194.27px;width:24.00px;height:14.4px;line-height:14.4px;font-size:12px;font-weight:bold;color:#2ab0e6;-webkit-text-stroke:0;"><span style="transform:scaleX(0.7105)">AUTO</span></div>
<div class="a" style="left:341.00px;top:220.50px;width:111.00px;height:28.50px;background:#fff;border:2px solid #1c1c1c;box-sizing:border-box;box-shadow:1px 1px 0 #e0e0e0;"></div>
<div class="t" style="left:373.00px;top:226.11px;width:47.00px;height:19.2px;line-height:19.2px;font-size:16px;font-weight:bold;color:#111;-webkit-text-stroke:0.3px #111;"><span style="transform:scaleX(0.7176)">TANK 22</span></div>
<div class="a" style="left:339.50px;top:253.00px;width:22.20px;height:21.30px;background:linear-gradient(#e2e2e2,#cfcfcf);box-shadow:inset 1px 1px 0 #f4f4f4, inset -1px -1px 0 #9c9c9c;"></div>
<div class="t" style="left:347.35px;top:256.32px;width:6.50px;height:15.6px;line-height:15.6px;font-size:13px;font-weight:normal;color:#262626;"><span style="transform:scaleX(0.8990)">1</span></div>
<div class="a" style="left:365.80px;top:252.80px;width:66.70px;height:21.70px;background:#d4d4d4;"></div>
<div class="a" style="left:365.80px;top:252.80px;width:65.70px;height:20.20px;background:#000;box-shadow:inset 1px 1px 0 #6a6a6a;"></div>
<div class="t" style="left:381.00px;top:255.87px;width:48.50px;height:15.6px;line-height:15.6px;font-size:13px;font-weight:normal;color:#1ac21a;-webkit-text-stroke:0.45px #1ac21a;"><span style="transform:scaleX(0.7216)">0.14 % LEL</span></div>
<svg class="a" style="left:437.80px;top:253.70px" width="16.099999999999966" height="20.30000000000001" viewBox="0 0 16.099999999999966 20.30000000000001"><polygon points="8.049999999999983,1 15.299999999999965,19.50000000000001 0.8,19.50000000000001" fill="#d2d2d2" stroke="#707070" stroke-width="1.1"/></svg>
<div class="a" style="left:339.50px;top:278.30px;width:22.20px;height:21.30px;background:linear-gradient(#e2e2e2,#cfcfcf);box-shadow:inset 1px 1px 0 #f4f4f4, inset -1px -1px 0 #9c9c9c;"></div>
<div class="t" style="left:347.35px;top:281.62px;width:6.50px;height:15.6px;line-height:15.6px;font-size:13px;font-weight:normal;color:#262626;"><span style="transform:scaleX(0.8990)">2</span></div>
<div class="a" style="left:365.80px;top:278.10px;width:66.70px;height:21.70px;background:#d4d4d4;"></div>
<div class="a" style="left:365.80px;top:278.10px;width:65.70px;height:20.20px;background:#000;box-shadow:inset 1px 1px 0 #6a6a6a;"></div>
<div class="t" style="left:381.00px;top:281.17px;width:48.50px;height:15.6px;line-height:15.6px;font-size:13px;font-weight:normal;color:#1ac21a;-webkit-text-stroke:0.45px #1ac21a;"><span style="transform:scaleX(0.7216)">0.12 % LEL</span></div>
<svg class="a" style="left:437.80px;top:279.00px" width="16.099999999999966" height="20.30000000000001" viewBox="0 0 16.099999999999966 20.30000000000001"><polygon points="8.049999999999983,1 15.299999999999965,19.50000000000001 0.8,19.50000000000001" fill="#d2d2d2" stroke="#707070" stroke-width="1.1"/></svg>
<div class="a" style="left:339.50px;top:303.60px;width:22.20px;height:21.30px;background:linear-gradient(#e2e2e2,#cfcfcf);box-shadow:inset 1px 1px 0 #f4f4f4, inset -1px -1px 0 #9c9c9c;"></div>
<div class="t" style="left:347.35px;top:306.92px;width:6.50px;height:15.6px;line-height:15.6px;font-size:13px;font-weight:normal;color:#262626;"><span style="transform:scaleX(0.8990)">3</span></div>
<div class="a" style="left:365.80px;top:303.40px;width:66.70px;height:21.70px;background:#d4d4d4;"></div>
<div class="a" style="left:365.80px;top:303.40px;width:65.70px;height:20.20px;background:#000;box-shadow:inset 1px 1px 0 #6a6a6a;"></div>
<div class="t" style="left:381.00px;top:306.47px;width:48.50px;height:15.6px;line-height:15.6px;font-size:13px;font-weight:normal;color:#1ac21a;-webkit-text-stroke:0.45px #1ac21a;"><span style="transform:scaleX(0.7216)">0.06 % LEL</span></div>
<svg class="a" style="left:437.80px;top:304.30px" width="16.099999999999966" height="20.30000000000001" viewBox="0 0 16.099999999999966 20.30000000000001"><polygon points="8.049999999999983,1 15.299999999999965,19.50000000000001 0.8,19.50000000000001" fill="#d2d2d2" stroke="#707070" stroke-width="1.1"/></svg>
<div class="a" style="left:339.50px;top:328.90px;width:22.20px;height:21.30px;background:linear-gradient(#e2e2e2,#cfcfcf);box-shadow:inset 1px 1px 0 #f4f4f4, inset -1px -1px 0 #9c9c9c;"></div>
<div class="t" style="left:347.35px;top:332.22px;width:6.50px;height:15.6px;line-height:15.6px;font-size:13px;font-weight:normal;color:#262626;"><span style="transform:scaleX(0.8990)">4</span></div>
<div class="a" style="left:365.80px;top:328.70px;width:66.70px;height:21.70px;background:#d4d4d4;"></div>
<div class="a" style="left:365.80px;top:328.70px;width:65.70px;height:20.20px;background:#000;box-shadow:inset 1px 1px 0 #6a6a6a;"></div>
<div class="t" style="left:381.00px;top:331.77px;width:48.50px;height:15.6px;line-height:15.6px;font-size:13px;font-weight:normal;color:#1ac21a;-webkit-text-stroke:0.45px #1ac21a;"><span style="transform:scaleX(0.7216)">0.12 % LEL</span></div>
<svg class="a" style="left:437.80px;top:329.60px" width="16.099999999999966" height="20.30000000000001" viewBox="0 0 16.099999999999966 20.30000000000001"><polygon points="8.049999999999983,1 15.299999999999965,19.50000000000001 0.8,19.50000000000001" fill="#d2d2d2" stroke="#707070" stroke-width="1.1"/></svg>
<div class="a" style="left:486.00px;top:186.5px;width:152px;height:203.5px;border-radius:50%;background:#b6b6b6;"></div>
<div class="t" style="left:510.25px;top:111.07px;width:44.50px;height:13.8px;line-height:13.8px;font-size:11.5px;font-weight:normal;color:#d8dee6;"><span style="transform:scaleX(0.7487)">SDV INLET</span></div>
<div class="t" style="left:564.25px;top:111.07px;width:52.50px;height:13.8px;line-height:13.8px;font-size:11.5px;font-weight:normal;color:#d8dee6;"><span style="transform:scaleX(0.7271)">SDV OUTLET</span></div>
<svg class="a" style="left:517.40px;top:128.40px" width="30.5" height="35" viewBox="0 0 30.5 35"><rect x="2" y="2" width="28.5" height="33" fill="#0c2a10"/><rect x="0.5" y="0.5" width="28.0" height="32.5" fill="#00ee00" stroke="#0a5a0a" stroke-width="1"/><line x1="0.5" y1="16.5" x2="28.5" y2="16.5" stroke="#0a5a0a" stroke-width="1.2"/><line x1="14.25" y1="16.5" x2="14.25" y2="33" stroke="#0a5a0a" stroke-width="1.2"/></svg>
<svg class="a" style="left:517.40px;top:160.00px" width="28.5" height="28.5" viewBox="0 0 28.5 28.5"><defs><linearGradient id="g51741600" x1="0" y1="0" x2="0" y2="1"><stop offset="0" stop-color="#40d040"/><stop offset="0.5" stop-color="#f0fff0"/><stop offset="1" stop-color="#40d040"/></linearGradient></defs><rect x="12.75" y="0" width="3" height="20.0" fill="#e0f5e0" stroke="#2a8a2a" stroke-width="0.6"/><polygon points="0.5,12.0 14.25,20.0 0.5,28.0" fill="url(#g51741600)" stroke="#2a8a2a" stroke-width="0.8"/><polygon points="28.0,12.0 14.25,20.0 28.0,28.0" fill="url(#g51741600)" stroke="#2a8a2a" stroke-width="0.8"/></svg>
<svg class="a" style="left:576.40px;top:128.40px" width="30.5" height="35" viewBox="0 0 30.5 35"><rect x="2" y="2" width="28.5" height="33" fill="#0c2a10"/><rect x="0.5" y="0.5" width="28.0" height="32.5" fill="#00ee00" stroke="#0a5a0a" stroke-width="1"/><line x1="0.5" y1="16.5" x2="28.5" y2="16.5" stroke="#0a5a0a" stroke-width="1.2"/><line x1="14.25" y1="16.5" x2="14.25" y2="33" stroke="#0a5a0a" stroke-width="1.2"/></svg>
<svg class="a" style="left:576.40px;top:160.00px" width="28.5" height="28.5" viewBox="0 0 28.5 28.5"><defs><linearGradient id="g57641600" x1="0" y1="0" x2="0" y2="1"><stop offset="0" stop-color="#40d040"/><stop offset="0.5" stop-color="#f0fff0"/><stop offset="1" stop-color="#40d040"/></linearGradient></defs><rect x="12.75" y="0" width="3" height="20.0" fill="#e0f5e0" stroke="#2a8a2a" stroke-width="0.6"/><polygon points="0.5,12.0 14.25,20.0 0.5,28.0" fill="url(#g57641600)" stroke="#2a8a2a" stroke-width="0.8"/><polygon points="28.0,12.0 14.25,20.0 28.0,28.0" fill="url(#g57641600)" stroke="#2a8a2a" stroke-width="0.8"/></svg>
<div class="a" style="left:507.70px;top:191.60px;width:49.30px;height:18.40px;background:#000;border:2px solid #3a3a3a;box-sizing:border-box;border-radius:1px;"></div>
<div class="t" style="left:520.30px;top:194.27px;width:24.00px;height:14.4px;line-height:14.4px;font-size:12px;font-weight:bold;color:#2ab0e6;-webkit-text-stroke:0;"><span style="transform:scaleX(0.7105)">AUTO</span></div>
<div class="a" style="left:567.30px;top:191.60px;width:49.30px;height:18.40px;background:#000;border:2px solid #3a3a3a;box-sizing:border-box;border-radius:1px;"></div>
<div class="t" style="left:579.90px;top:194.27px;width:24.00px;height:14.4px;line-height:14.4px;font-size:12px;font-weight:bold;color:#2ab0e6;-webkit-text-stroke:0;"><span style="transform:scaleX(0.7105)">AUTO</span></div>
<div class="a" style="left:507.00px;top:220.50px;width:111.00px;height:28.50px;background:#fff;border:2px solid #1c1c1c;box-sizing:border-box;box-shadow:1px 1px 0 #e0e0e0;"></div>
<div class="t" style="left:539.00px;top:226.11px;width:47.00px;height:19.2px;line-height:19.2px;font-size:16px;font-weight:bold;color:#111;-webkit-text-stroke:0.3px #111;"><span style="transform:scaleX(0.7176)">TANK 23</span></div>
<div class="a" style="left:505.50px;top:253.00px;width:22.20px;height:21.30px;background:linear-gradient(#e2e2e2,#cfcfcf);box-shadow:inset 1px 1px 0 #f4f4f4, inset -1px -1px 0 #9c9c9c;"></div>
<div class="t" style="left:513.35px;top:256.32px;width:6.50px;height:15.6px;line-height:15.6px;font-size:13px;font-weight:normal;color:#262626;"><span style="transform:scaleX(0.8990)">1</span></div>
<div class="a" style="left:531.80px;top:252.80px;width:66.70px;height:21.70px;background:#d4d4d4;"></div>
<div class="a" style="left:531.80px;top:252.80px;width:65.70px;height:20.20px;background:#000;box-shadow:inset 1px 1px 0 #6a6a6a;"></div>
<div class="t" style="left:547.00px;top:255.87px;width:48.50px;height:15.6px;line-height:15.6px;font-size:13px;font-weight:normal;color:#1ac21a;-webkit-text-stroke:0.45px #1ac21a;"><span style="transform:scaleX(0.7216)">0.12 % LEL</span></div>
<svg class="a" style="left:603.80px;top:253.70px" width="16.100000000000023" height="20.30000000000001" viewBox="0 0 16.100000000000023 20.30000000000001"><polygon points="8.050000000000011,1 15.300000000000022,19.50000000000001 0.8,19.50000000000001" fill="#d2d2d2" stroke="#707070" stroke-width="1.1"/></svg>
<div class="a" style="left:505.50px;top:278.30px;width:22.20px;height:21.30px;background:linear-gradient(#e2e2e2,#cfcfcf);box-shadow:inset 1px 1px 0 #f4f4f4, inset -1px -1px 0 #9c9c9c;"></div>
<div class="t" style="left:513.35px;top:281.62px;width:6.50px;height:15.6px;line-height:15.6px;font-size:13px;font-weight:normal;color:#262626;"><span style="transform:scaleX(0.8990)">2</span></div>
<div class="a" style="left:531.80px;top:278.10px;width:66.70px;height:21.70px;background:#d4d4d4;"></div>
<div class="a" style="left:531.80px;top:278.10px;width:65.70px;height:20.20px;background:#000;box-shadow:inset 1px 1px 0 #6a6a6a;"></div>
<div class="t" style="left:547.00px;top:281.17px;width:48.50px;height:15.6px;line-height:15.6px;font-size:13px;font-weight:normal;color:#1ac21a;-webkit-text-stroke:0.45px #1ac21a;"><span style="transform:scaleX(0.7216)">0.20 % LEL</span></div>
<svg class="a" style="left:603.80px;top:279.00px" width="16.100000000000023" height="20.30000000000001" viewBox="0 0 16.100000000000023 20.30000000000001"><polygon points="8.050000000000011,1 15.300000000000022,19.50000000000001 0.8,19.50000000000001" fill="#d2d2d2" stroke="#707070" stroke-width="1.1"/></svg>
<div class="a" style="left:505.50px;top:303.60px;width:22.20px;height:21.30px;background:linear-gradient(#e2e2e2,#cfcfcf);box-shadow:inset 1px 1px 0 #f4f4f4, inset -1px -1px 0 #9c9c9c;"></div>
<div class="t" style="left:513.35px;top:306.92px;width:6.50px;height:15.6px;line-height:15.6px;font-size:13px;font-weight:normal;color:#262626;"><span style="transform:scaleX(0.8990)">3</span></div>
<div class="a" style="left:531.80px;top:303.40px;width:66.70px;height:21.70px;background:#d4d4d4;"></div>
<div class="a" style="left:531.80px;top:303.40px;width:65.70px;height:20.20px;background:#000;box-shadow:inset 1px 1px 0 #6a6a6a;"></div>
<div class="t" style="left:547.00px;top:306.47px;width:48.50px;height:15.6px;line-height:15.6px;font-size:13px;font-weight:normal;color:#1ac21a;-webkit-text-stroke:0.45px #1ac21a;"><span style="transform:scaleX(0.7216)">0.06 % LEL</span></div>
<svg class="a" style="left:603.80px;top:304.30px" width="16.100000000000023" height="20.30000000000001" viewBox="0 0 16.100000000000023 20.30000000000001"><polygon points="8.050000000000011,1 15.300000000000022,19.50000000000001 0.8,19.50000000000001" fill="#d2d2d2" stroke="#707070" stroke-width="1.1"/></svg>
<div class="a" style="left:505.50px;top:328.90px;width:22.20px;height:21.30px;background:linear-gradient(#e2e2e2,#cfcfcf);box-shadow:inset 1px 1px 0 #f4f4f4, inset -1px -1px 0 #9c9c9c;"></div>
<div class="t" style="left:513.35px;top:332.22px;width:6.50px;height:15.6px;line-height:15.6px;font-size:13px;font-weight:normal;color:#262626;"><span style="transform:scaleX(0.8990)">4</span></div>
<div class="a" style="left:531.80px;top:328.70px;width:66.70px;height:21.70px;background:#d4d4d4;"></div>
<div class="a" style="left:531.80px;top:328.70px;width:65.70px;height:20.20px;background:#000;box-shadow:inset 1px 1px 0 #6a6a6a;"></div>
<div class="t" style="left:547.00px;top:331.77px;width:48.50px;height:15.6px;line-height:15.6px;font-size:13px;font-weight:normal;color:#1ac21a;-webkit-text-stroke:0.45px #1ac21a;"><span style="transform:scaleX(0.7216)">0.12 % LEL</span></div>
<svg class="a" style="left:603.80px;top:329.60px" width="16.100000000000023" height="20.30000000000001" viewBox="0 0 16.100000000000023 20.30000000000001"><polygon points="8.050000000000011,1 15.300000000000022,19.50000000000001 0.8,19.50000000000001" fill="#d2d2d2" stroke="#707070" stroke-width="1.1"/></svg>
<div class="a" style="left:652.60px;top:186.5px;width:152px;height:203.5px;border-radius:50%;background:#b6b6b6;"></div>
<div class="t" style="left:676.85px;top:111.07px;width:44.50px;height:13.8px;line-height:13.8px;font-size:11.5px;font-weight:normal;color:#d8dee6;"><span style="transform:scaleX(0.7487)">SDV INLET</span></div>
<div class="t" style="left:730.85px;top:111.07px;width:52.50px;height:13.8px;line-height:13.8px;font-size:11.5px;font-weight:normal;color:#d8dee6;"><span style="transform:scaleX(0.7271)">SDV OUTLET</span></div>
<svg class="a" style="left:684.00px;top:128.40px" width="30.5" height="35" viewBox="0 0 30.5 35"><rect x="2" y="2" width="28.5" height="33" fill="#0c2a10"/><rect x="0.5" y="0.5" width="28.0" height="32.5" fill="#00ee00" stroke="#0a5a0a" stroke-width="1"/><line x1="0.5" y1="16.5" x2="28.5" y2="16.5" stroke="#0a5a0a" stroke-width="1.2"/><line x1="14.25" y1="16.5" x2="14.25" y2="33" stroke="#0a5a0a" stroke-width="1.2"/></svg>
<svg class="a" style="left:684.00px;top:160.00px" width="28.5" height="28.5" viewBox="0 0 28.5 28.5"><defs><linearGradient id="g68401600" x1="0" y1="0" x2="0" y2="1"><stop offset="0" stop-color="#40d040"/><stop offset="0.5" stop-color="#f0fff0"/><stop offset="1" stop-color="#40d040"/></linearGradient></defs><rect x="12.75" y="0" width="3" height="20.0" fill="#e0f5e0" stroke="#2a8a2a" stroke-width="0.6"/><polygon points="0.5,12.0 14.25,20.0 0.5,28.0" fill="url(#g68401600)" stroke="#2a8a2a" stroke-width="0.8"/><polygon points="28.0,12.0 14.25,20.0 28.0,28.0" fill="url(#g68401600)" stroke="#2a8a2a" stroke-width="0.8"/></svg>
<svg class="a" style="left:743.00px;top:128.40px" width="30.5" height="35" viewBox="0 0 30.5 35"><rect x="2" y="2" width="28.5" height="33" fill="#0c2a10"/><rect x="0.5" y="0.5" width="28.0" height="32.5" fill="#00ee00" stroke="#0a5a0a" stroke-width="1"/><line x1="0.5" y1="16.5" x2="28.5" y2="16.5" stroke="#0a5a0a" stroke-width="1.2"/><line x1="14.25" y1="16.5" x2="14.25" y2="33" stroke="#0a5a0a" stroke-width="1.2"/></svg>
<svg class="a" style="left:743.00px;top:160.00px" width="28.5" height="28.5" viewBox="0 0 28.5 28.5"><defs><linearGradient id="g74301600" x1="0" y1="0" x2="0" y2="1"><stop offset="0" stop-color="#40d040"/><stop offset="0.5" stop-color="#f0fff0"/><stop offset="1" stop-color="#40d040"/></linearGradient></defs><rect x="12.75" y="0" width="3" height="20.0" fill="#e0f5e0" stroke="#2a8a2a" stroke-width="0.6"/><polygon points="0.5,12.0 14.25,20.0 0.5,28.0" fill="url(#g74301600)" stroke="#2a8a2a" stroke-width="0.8"/><polygon points="28.0,12.0 14.25,20.0 28.0,28.0" fill="url(#g74301600)" stroke="#2a8a2a" stroke-width="0.8"/></svg>
<div class="a" style="left:674.30px;top:191.60px;width:49.30px;height:18.40px;background:#000;border:2px solid #3a3a3a;box-sizing:border-box;border-radius:1px;"></div>
<div class="t" style="left:686.90px;top:194.27px;width:24.00px;height:14.4px;line-height:14.4px;font-size:12px;font-weight:bold;color:#2ab0e6;-webkit-text-stroke:0;"><span style="transform:scaleX(0.7105)">AUTO</span></div>
<div class="a" style="left:733.90px;top:191.60px;width:49.30px;height:18.40px;background:#000;border:2px solid #3a3a3a;box-sizing:border-box;border-radius:1px;"></div>
<div class="t" style="left:746.50px;top:194.27px;width:24.00px;height:14.4px;line-height:14.4px;font-size:12px;font-weight:bold;color:#2ab0e6;-webkit-text-stroke:0;"><span style="transform:scaleX(0.7105)">AUTO</span></div>
<div class="a" style="left:673.60px;top:220.50px;width:111.00px;height:28.50px;background:#fff;border:2px solid #1c1c1c;box-sizing:border-box;box-shadow:1px 1px 0 #e0e0e0;"></div>
<div class="t" style="left:705.60px;top:226.11px;width:47.00px;height:19.2px;line-height:19.2px;font-size:16px;font-weight:bold;color:#111;-webkit-text-stroke:0.3px #111;"><span style="transform:scaleX(0.7176)">TANK 24</span></div>
<div class="a" style="left:672.10px;top:253.00px;width:22.20px;height:21.30px;background:linear-gradient(#e2e2e2,#cfcfcf);box-shadow:inset 1px 1px 0 #f4f4f4, inset -1px -1px 0 #9c9c9c;"></div>
<div class="t" style="left:679.95px;top:256.32px;width:6.50px;height:15.6px;line-height:15.6px;font-size:13px;font-weight:normal;color:#262626;"><span style="transform:scaleX(0.8990)">1</span></div>
<div class="a" style="left:698.40px;top:252.80px;width:66.70px;height:21.70px;background:#d4d4d4;"></div>
<div class="a" style="left:698.40px;top:252.80px;width:65.70px;height:20.20px;background:#000;box-shadow:inset 1px 1px 0 #6a6a6a;"></div>
<div class="t" style="left:713.60px;top:255.87px;width:48.50px;height:15.6px;line-height:15.6px;font-size:13px;font-weight:normal;color:#1ac21a;-webkit-text-stroke:0.45px #1ac21a;"><span style="transform:scaleX(0.7216)">0.17 % LEL</span></div>
<svg class="a" style="left:770.40px;top:253.70px" width="16.100000000000023" height="20.30000000000001" viewBox="0 0 16.100000000000023 20.30000000000001"><polygon points="8.050000000000011,1 15.300000000000022,19.50000000000001 0.8,19.50000000000001" fill="#d2d2d2" stroke="#707070" stroke-width="1.1"/></svg>
<div class="a" style="left:672.10px;top:278.30px;width:22.20px;height:21.30px;background:linear-gradient(#e2e2e2,#cfcfcf);box-shadow:inset 1px 1px 0 #f4f4f4, inset -1px -1px 0 #9c9c9c;"></div>
<div class="t" style="left:679.95px;top:281.62px;width:6.50px;height:15.6px;line-height:15.6px;font-size:13px;font-weight:normal;color:#262626;"><span style="transform:scaleX(0.8990)">2</span></div>
<div class="a" style="left:698.40px;top:278.10px;width:66.70px;height:21.70px;background:#d4d4d4;"></div>
<div class="a" style="left:698.40px;top:278.10px;width:65.70px;height:20.20px;background:#000;box-shadow:inset 1px 1px 0 #6a6a6a;"></div>
<div class="t" style="left:713.60px;top:281.17px;width:48.50px;height:15.6px;line-height:15.6px;font-size:13px;font-weight:normal;color:#1ac21a;-webkit-text-stroke:0.45px #1ac21a;"><span style="transform:scaleX(0.7216)">0.17 % LEL</span></div>
<svg class="a" style="left:770.40px;top:279.00px" width="16.100000000000023" height="20.30000000000001" viewBox="0 0 16.100000000000023 20.30000000000001"><polygon points="8.050000000000011,1 15.300000000000022,19.50000000000001 0.8,19.50000000000001" fill="#d2d2d2" stroke="#707070" stroke-width="1.1"/></svg>
<div class="a" style="left:672.10px;top:303.60px;width:22.20px;height:21.30px;background:linear-gradient(#e2e2e2,#cfcfcf);box-shadow:inset 1px 1px 0 #f4f4f4, inset -1px -1px 0 #9c9c9c;"></div>
<div class="t" style="left:679.95px;top:306.92px;width:6.50px;height:15.6px;line-height:15.6px;font-size:13px;font-weight:normal;color:#262626;"><span style="transform:scaleX(0.8990)">3</span></div>
<div class="a" style="left:698.40px;top:303.40px;width:66.70px;height:21.70px;background:#d4d4d4;"></div>
<div class="a" style="left:698.40px;top:303.40px;width:65.70px;height:20.20px;background:#000;box-shadow:inset 1px 1px 0 #6a6a6a;"></div>
<div class="t" style="left:713.60px;top:306.47px;width:48.50px;height:15.6px;line-height:15.6px;font-size:13px;font-weight:normal;color:#1ac21a;-webkit-text-stroke:0.45px #1ac21a;"><span style="transform:scaleX(0.7216)">0.12 % LEL</span></div>
<svg class="a" style="left:770.40px;top:304.30px" width="16.100000000000023" height="20.30000000000001" viewBox="0 0 16.100000000000023 20.30000000000001"><polygon points="8.050000000000011,1 15.300000000000022,19.50000000000001 0.8,19.50000000000001" fill="#d2d2d2" stroke="#707070" stroke-width="1.1"/></svg>
<div class="a" style="left:672.10px;top:328.90px;width:22.20px;height:21.30px;background:linear-gradient(#e2e2e2,#cfcfcf);box-shadow:inset 1px 1px 0 #f4f4f4, inset -1px -1px 0 #9c9c9c;"></div>
<div class="t" style="left:679.95px;top:332.22px;width:6.50px;height:15.6px;line-height:15.6px;font-size:13px;font-weight:normal;color:#262626;"><span style="transform:scaleX(0.8990)">4</span></div>
<div class="a" style="left:698.40px;top:328.70px;width:66.70px;height:21.70px;background:#d4d4d4;"></div>
<div class="a" style="left:698.40px;top:328.70px;width:65.70px;height:20.20px;background:#000;box-shadow:inset 1px 1px 0 #6a6a6a;"></div>
<div class="t" style="left:713.60px;top:331.77px;width:48.50px;height:15.6px;line-height:15.6px;font-size:13px;font-weight:normal;color:#1ac21a;-webkit-text-stroke:0.45px #1ac21a;"><span style="transform:scaleX(0.7216)">0.12 % LEL</span></div>
<svg class="a" style="left:770.40px;top:329.60px" width="16.100000000000023" height="20.30000000000001" viewBox="0 0 16.100000000000023 20.30000000000001"><polygon points="8.050000000000011,1 15.300000000000022,19.50000000000001 0.8,19.50000000000001" fill="#d2d2d2" stroke="#707070" stroke-width="1.1"/></svg>
<div class="a" style="left:148.00px;top:394.00px;width:863.50px;height:24.00px;background:linear-gradient(#ffffff 0,#f4f5fa 3px,#dfe3f0 6px,#d6dcec 100%);"></div>
<div class="a" style="left:148.00px;top:417.00px;width:863.50px;height:2.00px;background:#bfc3cc;"></div>
<div class="a" style="left:148.00px;top:419.00px;width:863.50px;height:218.00px;background:#ebe9d8;"></div>
<svg class="a" style="left:148.00px;top:419.00px" width="863.5" height="218" viewBox="0 0 863.5 218"><line x1="22.8" y1="0" x2="22.8" y2="185" stroke="#e6e4d3" stroke-width="1"/><line x1="29.8" y1="0" x2="29.8" y2="185" stroke="#e6e4d3" stroke-width="1"/><line x1="36.8" y1="0" x2="36.8" y2="185" stroke="#e6e4d3" stroke-width="1"/><line x1="50.8" y1="0" x2="50.8" y2="185" stroke="#e6e4d3" stroke-width="1"/><line x1="57.8" y1="0" x2="57.8" y2="185" stroke="#e6e4d3" stroke-width="1"/><line x1="64.8" y1="0" x2="64.8" y2="185" stroke="#e6e4d3" stroke-width="1"/><line x1="71.8" y1="0" x2="71.8" y2="185" stroke="#e6e4d3" stroke-width="1"/><line x1="78.9" y1="0" x2="78.9" y2="185" stroke="#e6e4d3" stroke-width="1"/><line x1="92.9" y1="0" x2="92.9" y2="185" stroke="#e6e4d3" stroke-width="1"/><line x1="99.9" y1="0" x2="99.9" y2="185" stroke="#e6e4d3" stroke-width="1"/><line x1="106.9" y1="0" x2="106.9" y2="185" stroke="#e6e4d3" stroke-width="1"/><line x1="113.9" y1="0" x2="113.9" y2="185" stroke="#e6e4d3" stroke-width="1"/><line x1="120.9" y1="0" x2="120.9" y2="185" stroke="#e6e4d3" stroke-width="1"/><line x1="135.0" y1="0" x2="135.0" y2="185" stroke="#e6e4d3" stroke-width="1"/><line x1="142.0" y1="0" x2="142.0" y2="185" stroke="#e6e4d3" stroke-width="1"/><line x1="149.0" y1="0" x2="149.0" y2="185" stroke="#e6e4d3" stroke-width="1"/><line x1="156.0" y1="0" x2="156.0" y2="185" stroke="#e6e4d3" stroke-width="1"/><line x1="163.0" y1="0" x2="163.0" y2="185" stroke="#e6e4d3" stroke-width="1"/><line x1="177.0" y1="0" x2="177.0" y2="185" stroke="#e6e4d3" stroke-width="1"/><line x1="184.0" y1="0" x2="184.0" y2="185" stroke="#e6e4d3" stroke-width="1"/><line x1="191.0" y1="0" x2="191.0" y2="185" stroke="#e6e4d3" stroke-width="1"/><line x1="198.1" y1="0" x2="198.1" y2="185" stroke="#e6e4d3" stroke-width="1"/><line x1="205.1" y1="0" x2="205.1" y2="185" stroke="#e6e4d3" stroke-width="1"/><line x1="219.1" y1="0" x2="219.1" y2="185" stroke="#e6e4d3" stroke-width="1"/><line x1="226.1" y1="0" x2="226.1" y2="185" stroke="#e6e4d3" stroke-width="1"/><line x1="233.1" y1="0" x2="233.1" y2="185" stroke="#e6e4d3" stroke-width="1"/><line x1="240.1" y1="0" x2="240.1" y2="185" stroke="#e6e4d3" stroke-width="1"/><line x1="247.1" y1="0" x2="247.1" y2="185" stroke="#e6e4d3" stroke-width="1"/><line x1="261.2" y1="0" x2="261.2" y2="185" stroke="#e6e4d3" stroke-width="1"/><line x1="268.2" y1="0" x2="268.2" y2="185" stroke="#e6e4d3" stroke-width="1"/><line x1="275.2" y1="0" x2="275.2" y2="185" stroke="#e6e4d3" stroke-width="1"/><line x1="282.2" y1="0" x2="282.2" y2="185" stroke="#e6e4d3" stroke-width="1"/><line x1="289.2" y1="0" x2="289.2" y2="185" stroke="#e6e4d3" stroke-width="1"/><line x1="303.2" y1="0" x2="303.2" y2="185" stroke="#e6e4d3" stroke-width="1"/><line x1="310.2" y1="0" x2="310.2" y2="185" stroke="#e6e4d3" stroke-width="1"/><line x1="317.3" y1="0" x2="317.3" y2="185" stroke="#e6e4d3" stroke-width="1"/><line x1="324.3" y1="0" x2="324.3" y2="185" stroke="#e6e4d3" stroke-width="1"/><line x1="331.3" y1="0" x2="331.3" y2="185" stroke="#e6e4d3" stroke-width="1"/><line x1="345.3" y1="0" x2="345.3" y2="185" stroke="#e6e4d3" stroke-width="1"/><line x1="352.3" y1="0" x2="352.3" y2="185" stroke="#e6e4d3" stroke-width="1"/><line x1="359.3" y1="0" x2="359.3" y2="185" stroke="#e6e4d3" stroke-width="1"/><line x1="366.3" y1="0" x2="366.3" y2="185" stroke="#e6e4d3" stroke-width="1"/><line x1="373.3" y1="0" x2="373.3" y2="185" stroke="#e6e4d3" stroke-width="1"/><line x1="387.4" y1="0" x2="387.4" y2="185" stroke="#e6e4d3" stroke-width="1"/><line x1="394.4" y1="0" x2="394.4" y2="185" stroke="#e6e4d3" stroke-width="1"/><line x1="401.4" y1="0" x2="401.4" y2="185" stroke="#e6e4d3" stroke-width="1"/><line x1="408.4" y1="0" x2="408.4" y2="185" stroke="#e6e4d3" stroke-width="1"/><line x1="415.4" y1="0" x2="415.4" y2="185" stroke="#e6e4d3" stroke-width="1"/><line x1="429.4" y1="0" x2="429.4" y2="185" stroke="#e6e4d3" stroke-width="1"/><line x1="436.5" y1="0" x2="436.5" y2="185" stroke="#e6e4d3" stroke-width="1"/><line x1="443.5" y1="0" x2="443.5" y2="185" stroke="#e6e4d3" stroke-width="1"/><line x1="450.5" y1="0" x2="450.5" y2="185" stroke="#e6e4d3" stroke-width="1"/><line x1="457.5" y1="0" x2="457.5" y2="185" stroke="#e6e4d3" stroke-width="1"/><line x1="471.5" y1="0" x2="471.5" y2="185" stroke="#e6e4d3" stroke-width="1"/><line x1="478.5" y1="0" x2="478.5" y2="185" stroke="#e6e4d3" stroke-width="1"/><line x1="485.5" y1="0" x2="485.5" y2="185" stroke="#e6e4d3" stroke-width="1"/><line x1="492.5" y1="0" x2="492.5" y2="185" stroke="#e6e4d3" stroke-width="1"/><line x1="499.6" y1="0" x2="499.6" y2="185" stroke="#e6e4d3" stroke-width="1"/><line x1="513.6" y1="0" x2="513.6" y2="185" stroke="#e6e4d3" stroke-width="1"/><line x1="520.6" y1="0" x2="520.6" y2="185" stroke="#e6e4d3" stroke-width="1"/><line x1="527.6" y1="0" x2="527.6" y2="185" stroke="#e6e4d3" stroke-width="1"/><line x1="534.6" y1="0" x2="534.6" y2="185" stroke="#e6e4d3" stroke-width="1"/><line x1="541.6" y1="0" x2="541.6" y2="185" stroke="#e6e4d3" stroke-width="1"/><line x1="555.7" y1="0" x2="555.7" y2="185" stroke="#e6e4d3" stroke-width="1"/><line x1="562.7" y1="0" x2="562.7" y2="185" stroke="#e6e4d3" stroke-width="1"/><line x1="569.7" y1="0" x2="569.7" y2="185" stroke="#e6e4d3" stroke-width="1"/><line x1="576.7" y1="0" x2="576.7" y2="185" stroke="#e6e4d3" stroke-width="1"/><line x1="583.7" y1="0" x2="583.7" y2="185" stroke="#e6e4d3" stroke-width="1"/><line x1="597.7" y1="0" x2="597.7" y2="185" stroke="#e6e4d3" stroke-width="1"/><line x1="604.7" y1="0" x2="604.7" y2="185" stroke="#e6e4d3" stroke-width="1"/><line x1="611.7" y1="0" x2="611.7" y2="185" stroke="#e6e4d3" stroke-width="1"/><line x1="618.8" y1="0" x2="618.8" y2="185" stroke="#e6e4d3" stroke-width="1"/><line x1="625.8" y1="0" x2="625.8" y2="185" stroke="#e6e4d3" stroke-width="1"/><line x1="639.8" y1="0" x2="639.8" y2="185" stroke="#e6e4d3" stroke-width="1"/><line x1="646.8" y1="0" x2="646.8" y2="185" stroke="#e6e4d3" stroke-width="1"/><line x1="653.8" y1="0" x2="653.8" y2="185" stroke="#e6e4d3" stroke-width="1"/><line x1="660.8" y1="0" x2="660.8" y2="185" stroke="#e6e4d3" stroke-width="1"/><line x1="667.8" y1="0" x2="667.8" y2="185" stroke="#e6e4d3" stroke-width="1"/><line x1="681.9" y1="0" x2="681.9" y2="185" stroke="#e6e4d3" stroke-width="1"/><line x1="688.9" y1="0" x2="688.9" y2="185" stroke="#e6e4d3" stroke-width="1"/><line x1="695.9" y1="0" x2="695.9" y2="185" stroke="#e6e4d3" stroke-width="1"/><line x1="702.9" y1="0" x2="702.9" y2="185" stroke="#e6e4d3" stroke-width="1"/><line x1="709.9" y1="0" x2="709.9" y2="185" stroke="#e6e4d3" stroke-width="1"/><line x1="723.9" y1="0" x2="723.9" y2="185" stroke="#e6e4d3" stroke-width="1"/><line x1="730.9" y1="0" x2="730.9" y2="185" stroke="#e6e4d3" stroke-width="1"/><line x1="738.0" y1="0" x2="738.0" y2="185" stroke="#e6e4d3" stroke-width="1"/><line x1="745.0" y1="0" x2="745.0" y2="185" stroke="#e6e4d3" stroke-width="1"/><line x1="752.0" y1="0" x2="752.0" y2="185" stroke="#e6e4d3" stroke-width="1"/><line x1="766.0" y1="0" x2="766.0" y2="185" stroke="#e6e4d3" stroke-width="1"/><line x1="773.0" y1="0" x2="773.0" y2="185" stroke="#e6e4d3" stroke-width="1"/><line x1="780.0" y1="0" x2="780.0" y2="185" stroke="#e6e4d3" stroke-width="1"/><line x1="787.0" y1="0" x2="787.0" y2="185" stroke="#e6e4d3" stroke-width="1"/><line x1="794.0" y1="0" x2="794.0" y2="185" stroke="#e6e4d3" stroke-width="1"/><line x1="808.1" y1="0" x2="808.1" y2="185" stroke="#e6e4d3" stroke-width="1"/><line x1="815.1" y1="0" x2="815.1" y2="185" stroke="#e6e4d3" stroke-width="1"/><line x1="822.1" y1="0" x2="822.1" y2="185" stroke="#e6e4d3" stroke-width="1"/><line x1="829.1" y1="0" x2="829.1" y2="185" stroke="#e6e4d3" stroke-width="1"/><line x1="836.1" y1="0" x2="836.1" y2="185" stroke="#e6e4d3" stroke-width="1"/><line x1="850.1" y1="0" x2="850.1" y2="185" stroke="#e6e4d3" stroke-width="1"/><line x1="857.2" y1="0" x2="857.2" y2="185" stroke="#e6e4d3" stroke-width="1"/><line x1="21.5" y1="3.7" x2="863.5" y2="3.7" stroke="#e6e4d3" stroke-width="1"/><line x1="21.5" y1="18.3" x2="863.5" y2="18.3" stroke="#e6e4d3" stroke-width="1"/><line x1="21.5" y1="25.6" x2="863.5" y2="25.6" stroke="#e6e4d3" stroke-width="1"/><line x1="21.5" y1="32.9" x2="863.5" y2="32.9" stroke="#e6e4d3" stroke-width="1"/><line x1="21.5" y1="47.5" x2="863.5" y2="47.5" stroke="#e6e4d3" stroke-width="1"/><line x1="21.5" y1="54.8" x2="863.5" y2="54.8" stroke="#e6e4d3" stroke-width="1"/><line x1="21.5" y1="62.1" x2="863.5" y2="62.1" stroke="#e6e4d3" stroke-width="1"/><line x1="21.5" y1="76.7" x2="863.5" y2="76.7" stroke="#e6e4d3" stroke-width="1"/><line x1="21.5" y1="84.0" x2="863.5" y2="84.0" stroke="#e6e4d3" stroke-width="1"/><line x1="21.5" y1="91.3" x2="863.5" y2="91.3" stroke="#e6e4d3" stroke-width="1"/><line x1="21.5" y1="105.9" x2="863.5" y2="105.9" stroke="#e6e4d3" stroke-width="1"/><line x1="21.5" y1="113.2" x2="863.5" y2="113.2" stroke="#e6e4d3" stroke-width="1"/><line x1="21.5" y1="120.5" x2="863.5" y2="120.5" stroke="#e6e4d3" stroke-width="1"/><line x1="21.5" y1="135.1" x2="863.5" y2="135.1" stroke="#e6e4d3" stroke-width="1"/><line x1="21.5" y1="142.4" x2="863.5" y2="142.4" stroke="#e6e4d3" stroke-width="1"/><line x1="21.5" y1="149.7" x2="863.5" y2="149.7" stroke="#e6e4d3" stroke-width="1"/><line x1="21.5" y1="164.3" x2="863.5" y2="164.3" stroke="#e6e4d3" stroke-width="1"/><line x1="21.5" y1="171.6" x2="863.5" y2="171.6" stroke="#e6e4d3" stroke-width="1"/><line x1="21.5" y1="178.9" x2="863.5" y2="178.9" stroke="#e6e4d3" stroke-width="1"/><line x1="43.8" y1="0" x2="43.8" y2="185" stroke="#dcd8c6" stroke-width="1.5"/><line x1="85.9" y1="0" x2="85.9" y2="185" stroke="#dcd8c6" stroke-width="1.5"/><line x1="127.9" y1="0" x2="127.9" y2="185" stroke="#dcd8c6" stroke-width="1.5"/><line x1="170.0" y1="0" x2="170.0" y2="185" stroke="#dcd8c6" stroke-width="1.5"/><line x1="212.1" y1="0" x2="212.1" y2="185" stroke="#dcd8c6" stroke-width="1.5"/><line x1="254.1" y1="0" x2="254.1" y2="185" stroke="#dcd8c6" stroke-width="1.5"/><line x1="296.2" y1="0" x2="296.2" y2="185" stroke="#dcd8c6" stroke-width="1.5"/><line x1="338.3" y1="0" x2="338.3" y2="185" stroke="#dcd8c6" stroke-width="1.5"/><line x1="380.4" y1="0" x2="380.4" y2="185" stroke="#dcd8c6" stroke-width="1.5"/><line x1="422.4" y1="0" x2="422.4" y2="185" stroke="#dcd8c6" stroke-width="1.5"/><line x1="464.5" y1="0" x2="464.5" y2="185" stroke="#dcd8c6" stroke-width="1.5"/><line x1="506.6" y1="0" x2="506.6" y2="185" stroke="#dcd8c6" stroke-width="1.5"/><line x1="548.6" y1="0" x2="548.6" y2="185" stroke="#dcd8c6" stroke-width="1.5"/><line x1="590.7" y1="0" x2="590.7" y2="185" stroke="#dcd8c6" stroke-width="1.5"/><line x1="632.8" y1="0" x2="632.8" y2="185" stroke="#dcd8c6" stroke-width="1.5"/><line x1="674.8" y1="0" x2="674.8" y2="185" stroke="#dcd8c6" stroke-width="1.5"/><line x1="716.9" y1="0" x2="716.9" y2="185" stroke="#dcd8c6" stroke-width="1.5"/><line x1="759.0" y1="0" x2="759.0" y2="185" stroke="#dcd8c6" stroke-width="1.5"/><line x1="801.1" y1="0" x2="801.1" y2="185" stroke="#dcd8c6" stroke-width="1.5"/><line x1="843.1" y1="0" x2="843.1" y2="185" stroke="#dcd8c6" stroke-width="1.5"/><line x1="21.5" y1="40.2" x2="863.5" y2="40.2" stroke="#dcd8c6" stroke-width="1.5"/><line x1="21.5" y1="69.4" x2="863.5" y2="69.4" stroke="#dcd8c6" stroke-width="1.5"/><line x1="21.5" y1="98.6" x2="863.5" y2="98.6" stroke="#dcd8c6" stroke-width="1.5"/><line x1="21.5" y1="127.8" x2="863.5" y2="127.8" stroke="#dcd8c6" stroke-width="1.5"/><line x1="21.5" y1="157.0" x2="863.5" y2="157.0" stroke="#dcd8c6" stroke-width="1.5"/><line x1="443" y1="0" x2="443" y2="185" stroke="#9c9c94" stroke-width="1.8"/><line x1="21.5" y1="0" x2="21.5" y2="218" stroke="#7a7a70" stroke-width="1"/><line x1="18.5" y1="11.0" x2="21.5" y2="11.0" stroke="#555" stroke-width="1"/><line x1="19.5" y1="18.3" x2="21.5" y2="18.3" stroke="#555" stroke-width="1"/><line x1="19.5" y1="25.6" x2="21.5" y2="25.6" stroke="#555" stroke-width="1"/><line x1="19.5" y1="32.9" x2="21.5" y2="32.9" stroke="#555" stroke-width="1"/><line x1="18.5" y1="40.2" x2="21.5" y2="40.2" stroke="#555" stroke-width="1"/><line x1="19.5" y1="47.5" x2="21.5" y2="47.5" stroke="#555" stroke-width="1"/><line x1="19.5" y1="54.8" x2="21.5" y2="54.8" stroke="#555" stroke-width="1"/><line x1="19.5" y1="62.1" x2="21.5" y2="62.1" stroke="#555" stroke-width="1"/><line x1="18.5" y1="69.4" x2="21.5" y2="69.4" stroke="#555" stroke-width="1"/><line x1="19.5" y1="76.7" x2="21.5" y2="76.7" stroke="#555" stroke-width="1"/><line x1="19.5" y1="84.0" x2="21.5" y2="84.0" stroke="#555" stroke-width="1"/><line x1="19.5" y1="91.3" x2="21.5" y2="91.3" stroke="#555" stroke-width="1"/><line x1="18.5" y1="98.6" x2="21.5" y2="98.6" stroke="#555" stroke-width="1"/><line x1="19.5" y1="105.9" x2="21.5" y2="105.9" stroke="#555" stroke-width="1"/><line x1="19.5" y1="113.2" x2="21.5" y2="113.2" stroke="#555" stroke-width="1"/><line x1="19.5" y1="120.5" x2="21.5" y2="120.5" stroke="#555" stroke-width="1"/><line x1="18.5" y1="127.8" x2="21.5" y2="127.8" stroke="#555" stroke-width="1"/><line x1="19.5" y1="135.1" x2="21.5" y2="135.1" stroke="#555" stroke-width="1"/><line x1="19.5" y1="142.4" x2="21.5" y2="142.4" stroke="#555" stroke-width="1"/><line x1="19.5" y1="149.7" x2="21.5" y2="149.7" stroke="#555" stroke-width="1"/><line x1="18.5" y1="157.0" x2="21.5" y2="157.0" stroke="#555" stroke-width="1"/><line x1="19.5" y1="164.3" x2="21.5" y2="164.3" stroke="#555" stroke-width="1"/><line x1="19.5" y1="171.6" x2="21.5" y2="171.6" stroke="#555" stroke-width="1"/><line x1="19.5" y1="178.9" x2="21.5" y2="178.9" stroke="#555" stroke-width="1"/><line x1="18.5" y1="186.2" x2="21.5" y2="186.2" stroke="#555" stroke-width="1"/><line x1="0" y1="185.5" x2="21.5" y2="185.5" stroke="#9a9a90" stroke-width="1"/><line x1="21.5" y1="10.800000000000011" x2="863.5" y2="10.800000000000011" stroke="#2a1010" stroke-width="2.6"/><line x1="21.5" y1="184.20000000000005" x2="863.5" y2="184.20000000000005" stroke="#3cd6d0" stroke-width="2.4"/><line x1="630.6" y1="2" x2="630.6" y2="9" stroke="#30d0d0" stroke-width="1.4"/><line x1="22.8" y1="185.5" x2="22.8" y2="187.5" stroke="#555" stroke-width="1"/><line x1="29.8" y1="185.5" x2="29.8" y2="187.5" stroke="#555" stroke-width="1"/><line x1="36.8" y1="185.5" x2="36.8" y2="187.5" stroke="#555" stroke-width="1"/><line x1="43.8" y1="185.5" x2="43.8" y2="189.0" stroke="#555" stroke-width="1"/><line x1="50.8" y1="185.5" x2="50.8" y2="187.5" stroke="#555" stroke-width="1"/><line x1="57.8" y1="185.5" x2="57.8" y2="187.5" stroke="#555" stroke-width="1"/><line x1="64.8" y1="185.5" x2="64.8" y2="187.5" stroke="#555" stroke-width="1"/><line x1="71.8" y1="185.5" x2="71.8" y2="187.5" stroke="#555" stroke-width="1"/><line x1="78.9" y1="185.5" x2="78.9" y2="187.5" stroke="#555" stroke-width="1"/><line x1="85.9" y1="185.5" x2="85.9" y2="189.0" stroke="#555" stroke-width="1"/><line x1="92.9" y1="185.5" x2="92.9" y2="187.5" stroke="#555" stroke-width="1"/><line x1="99.9" y1="185.5" x2="99.9" y2="187.5" stroke="#555" stroke-width="1"/><line x1="106.9" y1="185.5" x2="106.9" y2="187.5" stroke="#555" stroke-width="1"/><line x1="113.9" y1="185.5" x2="113.9" y2="187.5" stroke="#555" stroke-width="1"/><line x1="120.9" y1="185.5" x2="120.9" y2="187.5" stroke="#555" stroke-width="1"/><line x1="127.9" y1="185.5" x2="127.9" y2="189.0" stroke="#555" stroke-width="1"/><line x1="135.0" y1="185.5" x2="135.0" y2="187.5" stroke="#555" stroke-width="1"/><line x1="142.0" y1="185.5" x2="142.0" y2="187.5" stroke="#555" stroke-width="1"/><line x1="149.0" y1="185.5" x2="149.0" y2="187.5" stroke="#555" stroke-width="1"/><line x1="156.0" y1="185.5" x2="156.0" y2="187.5" stroke="#555" stroke-width="1"/><line x1="163.0" y1="185.5" x2="163.0" y2="187.5" stroke="#555" stroke-width="1"/><line x1="170.0" y1="185.5" x2="170.0" y2="189.0" stroke="#555" stroke-width="1"/><line x1="177.0" y1="185.5" x2="177.0" y2="187.5" stroke="#555" stroke-width="1"/><line x1="184.0" y1="185.5" x2="184.0" y2="187.5" stroke="#555" stroke-width="1"/><line x1="191.0" y1="185.5" x2="191.0" y2="187.5" stroke="#555" stroke-width="1"/><line x1="198.1" y1="185.5" x2="198.1" y2="187.5" stroke="#555" stroke-width="1"/><line x1="205.1" y1="185.5" x2="205.1" y2="187.5" stroke="#555" stroke-width="1"/><line x1="212.1" y1="185.5" x2="212.1" y2="189.0" stroke="#555" stroke-width="1"/><line x1="219.1" y1="185.5" x2="219.1" y2="187.5" stroke="#555" stroke-width="1"/><line x1="226.1" y1="185.5" x2="226.1" y2="187.5" stroke="#555" stroke-width="1"/><line x1="233.1" y1="185.5" x2="233.1" y2="187.5" stroke="#555" stroke-width="1"/><line x1="240.1" y1="185.5" x2="240.1" y2="187.5" stroke="#555" stroke-width="1"/><line x1="247.1" y1="185.5" x2="247.1" y2="187.5" stroke="#555" stroke-width="1"/><line x1="254.1" y1="185.5" x2="254.1" y2="189.0" stroke="#555" stroke-width="1"/><line x1="261.2" y1="185.5" x2="261.2" y2="187.5" stroke="#555" stroke-width="1"/><line x1="268.2" y1="185.5" x2="268.2" y2="187.5" stroke="#555" stroke-width="1"/><line x1="275.2" y1="185.5" x2="275.2" y2="187.5" stroke="#555" stroke-width="1"/><line x1="282.2" y1="185.5" x2="282.2" y2="187.5" stroke="#555" stroke-width="1"/><line x1="289.2" y1="185.5" x2="289.2" y2="187.5" stroke="#555" stroke-width="1"/><line x1="296.2" y1="185.5" x2="296.2" y2="189.0" stroke="#555" stroke-width="1"/><line x1="303.2" y1="185.5" x2="303.2" y2="187.5" stroke="#555" stroke-width="1"/><line x1="310.2" y1="185.5" x2="310.2" y2="187.5" stroke="#555" stroke-width="1"/><line x1="317.3" y1="185.5" x2="317.3" y2="187.5" stroke="#555" stroke-width="1"/><line x1="324.3" y1="185.5" x2="324.3" y2="187.5" stroke="#555" stroke-width="1"/><line x1="331.3" y1="185.5" x2="331.3" y2="187.5" stroke="#555" stroke-width="1"/><line x1="338.3" y1="185.5" x2="338.3" y2="189.0" stroke="#555" stroke-width="1"/><line x1="345.3" y1="185.5" x2="345.3" y2="187.5" stroke="#555" stroke-width="1"/><line x1="352.3" y1="185.5" x2="352.3" y2="187.5" stroke="#555" stroke-width="1"/><line x1="359.3" y1="185.5" x2="359.3" y2="187.5" stroke="#555" stroke-width="1"/><line x1="366.3" y1="185.5" x2="366.3" y2="187.5" stroke="#555" stroke-width="1"/><line x1="373.3" y1="185.5" x2="373.3" y2="187.5" stroke="#555" stroke-width="1"/><line x1="380.4" y1="185.5" x2="380.4" y2="189.0" stroke="#555" stroke-width="1"/><line x1="387.4" y1="185.5" x2="387.4" y2="187.5" stroke="#555" stroke-width="1"/><line x1="394.4" y1="185.5" x2="394.4" y2="187.5" stroke="#555" stroke-width="1"/><line x1="401.4" y1="185.5" x2="401.4" y2="187.5" stroke="#555" stroke-width="1"/><line x1="408.4" y1="185.5" x2="408.4" y2="187.5" stroke="#555" stroke-width="1"/><line x1="415.4" y1="185.5" x2="415.4" y2="187.5" stroke="#555" stroke-width="1"/><line x1="422.4" y1="185.5" x2="422.4" y2="189.0" stroke="#555" stroke-width="1"/><line x1="429.4" y1="185.5" x2="429.4" y2="187.5" stroke="#555" stroke-width="1"/><line x1="436.5" y1="185.5" x2="436.5" y2="187.5" stroke="#555" stroke-width="1"/><line x1="443.5" y1="185.5" x2="443.5" y2="187.5" stroke="#555" stroke-width="1"/><line x1="450.5" y1="185.5" x2="450.5" y2="187.5" stroke="#555" stroke-width="1"/><line x1="457.5" y1="185.5" x2="457.5" y2="187.5" stroke="#555" stroke-width="1"/><line x1="464.5" y1="185.5" x2="464.5" y2="189.0" stroke="#555" stroke-width="1"/><line x1="471.5" y1="185.5" x2="471.5" y2="187.5" stroke="#555" stroke-width="1"/><line x1="478.5" y1="185.5" x2="478.5" y2="187.5" stroke="#555" stroke-width="1"/><line x1="485.5" y1="185.5" x2="485.5" y2="187.5" stroke="#555" stroke-width="1"/><line x1="492.5" y1="185.5" x2="492.5" y2="187.5" stroke="#555" stroke-width="1"/><line x1="499.6" y1="185.5" x2="499.6" y2="187.5" stroke="#555" stroke-width="1"/><line x1="506.6" y1="185.5" x2="506.6" y2="189.0" stroke="#555" stroke-width="1"/><line x1="513.6" y1="185.5" x2="513.6" y2="187.5" stroke="#555" stroke-width="1"/><line x1="520.6" y1="185.5" x2="520.6" y2="187.5" stroke="#555" stroke-width="1"/><line x1="527.6" y1="185.5" x2="527.6" y2="187.5" stroke="#555" stroke-width="1"/><line x1="534.6" y1="185.5" x2="534.6" y2="187.5" stroke="#555" stroke-width="1"/><line x1="541.6" y1="185.5" x2="541.6" y2="187.5" stroke="#555" stroke-width="1"/><line x1="548.6" y1="185.5" x2="548.6" y2="189.0" stroke="#555" stroke-width="1"/><line x1="555.7" y1="185.5" x2="555.7" y2="187.5" stroke="#555" stroke-width="1"/><line x1="562.7" y1="185.5" x2="562.7" y2="187.5" stroke="#555" stroke-width="1"/><line x1="569.7" y1="185.5" x2="569.7" y2="187.5" stroke="#555" stroke-width="1"/><line x1="576.7" y1="185.5" x2="576.7" y2="187.5" stroke="#555" stroke-width="1"/><line x1="583.7" y1="185.5" x2="583.7" y2="187.5" stroke="#555" stroke-width="1"/><line x1="590.7" y1="185.5" x2="590.7" y2="189.0" stroke="#555" stroke-width="1"/><line x1="597.7" y1="185.5" x2="597.7" y2="187.5" stroke="#555" stroke-width="1"/><line x1="604.7" y1="185.5" x2="604.7" y2="187.5" stroke="#555" stroke-width="1"/><line x1="611.7" y1="185.5" x2="611.7" y2="187.5" stroke="#555" stroke-width="1"/><line x1="618.8" y1="185.5" x2="618.8" y2="187.5" stroke="#555" stroke-width="1"/><line x1="625.8" y1="185.5" x2="625.8" y2="187.5" stroke="#555" stroke-width="1"/><line x1="632.8" y1="185.5" x2="632.8" y2="189.0" stroke="#555" stroke-width="1"/><line x1="639.8" y1="185.5" x2="639.8" y2="187.5" stroke="#555" stroke-width="1"/><line x1="646.8" y1="185.5" x2="646.8" y2="187.5" stroke="#555" stroke-width="1"/><line x1="653.8" y1="185.5" x2="653.8" y2="187.5" stroke="#555" stroke-width="1"/><line x1="660.8" y1="185.5" x2="660.8" y2="187.5" stroke="#555" stroke-width="1"/><line x1="667.8" y1="185.5" x2="667.8" y2="187.5" stroke="#555" stroke-width="1"/><line x1="674.8" y1="185.5" x2="674.8" y2="189.0" stroke="#555" stroke-width="1"/><line x1="681.9" y1="185.5" x2="681.9" y2="187.5" stroke="#555" stroke-width="1"/><line x1="688.9" y1="185.5" x2="688.9" y2="187.5" stroke="#555" stroke-width="1"/><line x1="695.9" y1="185.5" x2="695.9" y2="187.5" stroke="#555" stroke-width="1"/><line x1="702.9" y1="185.5" x2="702.9" y2="187.5" stroke="#555" stroke-width="1"/><line x1="709.9" y1="185.5" x2="709.9" y2="187.5" stroke="#555" stroke-width="1"/><line x1="716.9" y1="185.5" x2="716.9" y2="189.0" stroke="#555" stroke-width="1"/><line x1="723.9" y1="185.5" x2="723.9" y2="187.5" stroke="#555" stroke-width="1"/><line x1="730.9" y1="185.5" x2="730.9" y2="187.5" stroke="#555" stroke-width="1"/><line x1="738.0" y1="185.5" x2="738.0" y2="187.5" stroke="#555" stroke-width="1"/><line x1="745.0" y1="185.5" x2="745.0" y2="187.5" stroke="#555" stroke-width="1"/><line x1="752.0" y1="185.5" x2="752.0" y2="187.5" stroke="#555" stroke-width="1"/><line x1="759.0" y1="185.5" x2="759.0" y2="189.0" stroke="#555" stroke-width="1"/><line x1="766.0" y1="185.5" x2="766.0" y2="187.5" stroke="#555" stroke-width="1"/><line x1="773.0" y1="185.5" x2="773.0" y2="187.5" stroke="#555" stroke-width="1"/><line x1="780.0" y1="185.5" x2="780.0" y2="187.5" stroke="#555" stroke-width="1"/><line x1="787.0" y1="185.5" x2="787.0" y2="187.5" stroke="#555" stroke-width="1"/><line x1="794.0" y1="185.5" x2="794.0" y2="187.5" stroke="#555" stroke-width="1"/><line x1="801.1" y1="185.5" x2="801.1" y2="189.0" stroke="#555" stroke-width="1"/><line x1="808.1" y1="185.5" x2="808.1" y2="187.5" stroke="#555" stroke-width="1"/><line x1="815.1" y1="185.5" x2="815.1" y2="187.5" stroke="#555" stroke-width="1"/><line x1="822.1" y1="185.5" x2="822.1" y2="187.5" stroke="#555" stroke-width="1"/><line x1="829.1" y1="185.5" x2="829.1" y2="187.5" stroke="#555" stroke-width="1"/><line x1="836.1" y1="185.5" x2="836.1" y2="187.5" stroke="#555" stroke-width="1"/><line x1="843.1" y1="185.5" x2="843.1" y2="189.0" stroke="#555" stroke-width="1"/><line x1="850.1" y1="185.5" x2="850.1" y2="187.5" stroke="#555" stroke-width="1"/><line x1="857.2" y1="185.5" x2="857.2" y2="187.5" stroke="#555" stroke-width="1"/></svg>
<div class="t" style="left:161.90px;top:425.98px;width:3.10px;height:9.0px;line-height:9.0px;font-size:7.5px;font-weight:normal;color:#444;"><span style="transform:scaleX(0.7432)">0</span></div>
<div class="t" style="left:155.70px;top:455.18px;width:9.30px;height:9.0px;line-height:9.0px;font-size:7.5px;font-weight:normal;color:#444;"><span style="transform:scaleX(0.8579)">-20</span></div>
<div class="t" style="left:155.70px;top:484.38px;width:9.30px;height:9.0px;line-height:9.0px;font-size:7.5px;font-weight:normal;color:#444;"><span style="transform:scaleX(0.8579)">-40</span></div>
<div class="t" style="left:155.70px;top:513.58px;width:9.30px;height:9.0px;line-height:9.0px;font-size:7.5px;font-weight:normal;color:#444;"><span style="transform:scaleX(0.8579)">-60</span></div>
<div class="t" style="left:155.70px;top:542.78px;width:9.30px;height:9.0px;line-height:9.0px;font-size:7.5px;font-weight:normal;color:#444;"><span style="transform:scaleX(0.8579)">-80</span></div>
<div class="t" style="left:152.60px;top:571.98px;width:12.40px;height:9.0px;line-height:9.0px;font-size:7.5px;font-weight:normal;color:#444;"><span style="transform:scaleX(0.8260)">-100</span></div>
<div class="t" style="left:152.60px;top:596.28px;width:12.40px;height:9.0px;line-height:9.0px;font-size:7.5px;font-weight:normal;color:#444;"><span style="transform:scaleX(0.8260)">-120</span></div>
<div class="t" style="left:177.80px;top:612.18px;width:28.00px;height:9.0px;line-height:9.0px;font-size:7.5px;font-weight:normal;color:#3c3c3c;"><span style="transform:scaleX(0.7300)">3:36:00 PM</span></div>
<div class="t" style="left:177.80px;top:621.98px;width:28.00px;height:9.0px;line-height:9.0px;font-size:7.5px;font-weight:normal;color:#3c3c3c;"><span style="transform:scaleX(0.7459)">10/30/2018</span></div>
<div class="t" style="left:219.87px;top:612.18px;width:28.00px;height:9.0px;line-height:9.0px;font-size:7.5px;font-weight:normal;color:#3c3c3c;"><span style="transform:scaleX(0.7300)">3:39:00 PM</span></div>
<div class="t" style="left:219.87px;top:621.98px;width:28.00px;height:9.0px;line-height:9.0px;font-size:7.5px;font-weight:normal;color:#3c3c3c;"><span style="transform:scaleX(0.7459)">10/30/2018</span></div>
<div class="t" style="left:261.94px;top:612.18px;width:28.00px;height:9.0px;line-height:9.0px;font-size:7.5px;font-weight:normal;color:#3c3c3c;"><span style="transform:scaleX(0.7300)">3:42:00 PM</span></div>
<div class="t" style="left:261.94px;top:621.98px;width:28.00px;height:9.0px;line-height:9.0px;font-size:7.5px;font-weight:normal;color:#3c3c3c;"><span style="transform:scaleX(0.7459)">10/30/2018</span></div>
<div class="t" style="left:304.01px;top:612.18px;width:28.00px;height:9.0px;line-height:9.0px;font-size:7.5px;font-weight:normal;color:#3c3c3c;"><span style="transform:scaleX(0.7300)">3:45:00 PM</span></div>
<div class="t" style="left:304.01px;top:621.98px;width:28.00px;height:9.0px;line-height:9.0px;font-size:7.5px;font-weight:normal;color:#3c3c3c;"><span style="transform:scaleX(0.7459)">10/30/2018</span></div>
<div class="t" style="left:346.08px;top:612.18px;width:28.00px;height:9.0px;line-height:9.0px;font-size:7.5px;font-weight:normal;color:#3c3c3c;"><span style="transform:scaleX(0.7300)">3:48:00 PM</span></div>
<div class="t" style="left:346.08px;top:621.98px;width:28.00px;height:9.0px;line-height:9.0px;font-size:7.5px;font-weight:normal;color:#3c3c3c;"><span style="transform:scaleX(0.7459)">10/30/2018</span></div>
<div class="t" style="left:388.15px;top:612.18px;width:28.00px;height:9.0px;line-height:9.0px;font-size:7.5px;font-weight:normal;color:#3c3c3c;"><span style="transform:scaleX(0.7300)">3:51:00 PM</span></div>
<div class="t" style="left:388.15px;top:621.98px;width:28.00px;height:9.0px;line-height:9.0px;font-size:7.5px;font-weight:normal;color:#3c3c3c;"><span style="transform:scaleX(0.7459)">10/30/2018</span></div>
<div class="t" style="left:430.22px;top:612.18px;width:28.00px;height:9.0px;line-height:9.0px;font-size:7.5px;font-weight:normal;color:#3c3c3c;"><span style="transform:scaleX(0.7300)">3:54:00 PM</span></div>
<div class="t" style="left:430.22px;top:621.98px;width:28.00px;height:9.0px;line-height:9.0px;font-size:7.5px;font-weight:normal;color:#3c3c3c;"><span style="transform:scaleX(0.7459)">10/30/2018</span></div>
<div class="t" style="left:472.29px;top:612.18px;width:28.00px;height:9.0px;line-height:9.0px;font-size:7.5px;font-weight:normal;color:#3c3c3c;"><span style="transform:scaleX(0.7300)">3:57:00 PM</span></div>
<div class="t" style="left:472.29px;top:621.98px;width:28.00px;height:9.0px;line-height:9.0px;font-size:7.5px;font-weight:normal;color:#3c3c3c;"><span style="transform:scaleX(0.7459)">10/30/2018</span></div>
<div class="t" style="left:514.36px;top:612.18px;width:28.00px;height:9.0px;line-height:9.0px;font-size:7.5px;font-weight:normal;color:#3c3c3c;"><span style="transform:scaleX(0.7300)">4:00:00 PM</span></div>
<div class="t" style="left:514.36px;top:621.98px;width:28.00px;height:9.0px;line-height:9.0px;font-size:7.5px;font-weight:normal;color:#3c3c3c;"><span style="transform:scaleX(0.7459)">10/30/2018</span></div>
<div class="t" style="left:556.43px;top:612.18px;width:28.00px;height:9.0px;line-height:9.0px;font-size:7.5px;font-weight:normal;color:#3c3c3c;"><span style="transform:scaleX(0.7300)">4:03:00 PM</span></div>
<div class="t" style="left:556.43px;top:621.98px;width:28.00px;height:9.0px;line-height:9.0px;font-size:7.5px;font-weight:normal;color:#3c3c3c;"><span style="transform:scaleX(0.7459)">10/30/2018</span></div>
<div class="t" style="left:598.50px;top:612.18px;width:28.00px;height:9.0px;line-height:9.0px;font-size:7.5px;font-weight:normal;color:#3c3c3c;"><span style="transform:scaleX(0.7300)">4:06:00 PM</span></div>
<div class="t" style="left:598.50px;top:621.98px;width:28.00px;height:9.0px;line-height:9.0px;font-size:7.5px;font-weight:normal;color:#3c3c3c;"><span style="transform:scaleX(0.7459)">10/30/2018</span></div>
<div class="t" style="left:640.57px;top:612.18px;width:28.00px;height:9.0px;line-height:9.0px;font-size:7.5px;font-weight:normal;color:#3c3c3c;"><span style="transform:scaleX(0.7300)">4:09:00 PM</span></div>
<div class="t" style="left:640.57px;top:621.98px;width:28.00px;height:9.0px;line-height:9.0px;font-size:7.5px;font-weight:normal;color:#3c3c3c;"><span style="transform:scaleX(0.7459)">10/30/2018</span></div>
<div class="t" style="left:682.64px;top:612.18px;width:28.00px;height:9.0px;line-height:9.0px;font-size:7.5px;font-weight:normal;color:#3c3c3c;"><span style="transform:scaleX(0.7300)">4:12:00 PM</span></div>
<div class="t" style="left:682.64px;top:621.98px;width:28.00px;height:9.0px;line-height:9.0px;font-size:7.5px;font-weight:normal;color:#3c3c3c;"><span style="transform:scaleX(0.7459)">10/30/2018</span></div>
<div class="t" style="left:724.71px;top:612.18px;width:28.00px;height:9.0px;line-height:9.0px;font-size:7.5px;font-weight:normal;color:#3c3c3c;"><span style="transform:scaleX(0.7300)">4:15:00 PM</span></div>
<div class="t" style="left:724.71px;top:621.98px;width:28.00px;height:9.0px;line-height:9.0px;font-size:7.5px;font-weight:normal;color:#3c3c3c;"><span style="transform:scaleX(0.7459)">10/30/2018</span></div>
<div class="t" style="left:766.78px;top:612.18px;width:28.00px;height:9.0px;line-height:9.0px;font-size:7.5px;font-weight:normal;color:#3c3c3c;"><span style="transform:scaleX(0.7300)">4:18:00 PM</span></div>
<div class="t" style="left:766.78px;top:621.98px;width:28.00px;height:9.0px;line-height:9.0px;font-size:7.5px;font-weight:normal;color:#3c3c3c;"><span style="transform:scaleX(0.7459)">10/30/2018</span></div>
<div class="t" style="left:808.85px;top:612.18px;width:28.00px;height:9.0px;line-height:9.0px;font-size:7.5px;font-weight:normal;color:#3c3c3c;"><span style="transform:scaleX(0.7300)">4:21:00 PM</span></div>
<div class="t" style="left:808.85px;top:621.98px;width:28.00px;height:9.0px;line-height:9.0px;font-size:7.5px;font-weight:normal;color:#3c3c3c;"><span style="transform:scaleX(0.7459)">10/30/2018</span></div>
<div class="t" style="left:850.92px;top:612.18px;width:28.00px;height:9.0px;line-height:9.0px;font-size:7.5px;font-weight:normal;color:#3c3c3c;"><span style="transform:scaleX(0.7300)">4:24:00 PM</span></div>
<div class="t" style="left:850.92px;top:621.98px;width:28.00px;height:9.0px;line-height:9.0px;font-size:7.5px;font-weight:normal;color:#3c3c3c;"><span style="transform:scaleX(0.7459)">10/30/2018</span></div>
<div class="t" style="left:892.99px;top:612.18px;width:28.00px;height:9.0px;line-height:9.0px;font-size:7.5px;font-weight:normal;color:#3c3c3c;"><span style="transform:scaleX(0.7300)">4:27:00 PM</span></div>
<div class="t" style="left:892.99px;top:621.98px;width:28.00px;height:9.0px;line-height:9.0px;font-size:7.5px;font-weight:normal;color:#3c3c3c;"><span style="transform:scaleX(0.7459)">10/30/2018</span></div>
<div class="t" style="left:935.06px;top:612.18px;width:28.00px;height:9.0px;line-height:9.0px;font-size:7.5px;font-weight:normal;color:#3c3c3c;"><span style="transform:scaleX(0.7300)">4:30:00 PM</span></div>
<div class="t" style="left:935.06px;top:621.98px;width:28.00px;height:9.0px;line-height:9.0px;font-size:7.5px;font-weight:normal;color:#3c3c3c;"><span style="transform:scaleX(0.7459)">10/30/2018</span></div>
<div class="t" style="left:977.13px;top:612.18px;width:28.00px;height:9.0px;line-height:9.0px;font-size:7.5px;font-weight:normal;color:#3c3c3c;"><span style="transform:scaleX(0.7300)">4:33:00 PM</span></div>
<div class="t" style="left:977.13px;top:621.98px;width:28.00px;height:9.0px;line-height:9.0px;font-size:7.5px;font-weight:normal;color:#3c3c3c;"><span style="transform:scaleX(0.7459)">10/30/2018</span></div>
<svg class="a" style="left:153.00px;top:609.00px" width="12.5" height="18.5" viewBox="0 0 12.5 18.5"><rect x="0.5" y="1" width="11.5" height="2.6" rx="1" fill="#5a1a44"/><rect x="1" y="3.6" width="10.5" height="1.4" fill="#6a8a6a"/><rect x="0.5" y="5" width="11.5" height="1.8" fill="#c8a8d8"/><rect x="0.5" y="6.8" width="11.5" height="3" fill="#5f7050"/><rect x="1" y="9.8" width="10.5" height="1" fill="#a0a8a0"/><rect x="0.5" y="10.8" width="11.5" height="2.6" rx="1" fill="#550a38"/><rect x="1" y="13.4" width="10.5" height="1.6" fill="#70a070"/><ellipse cx="6.2" cy="16.3" rx="3.2" ry="1.6" fill="#e070e0"/></svg>
<svg class="a" style="left:153.70px;top:398.00px" width="14" height="16" viewBox="0 0 14 16"><rect x="1.5" y="1.5" width="10" height="13" fill="#fff" stroke="#8899aa"/><rect x="1.5" y="1.5" width="10" height="3" fill="#e04040"/><circle cx="7" cy="10" r="3" fill="#4a90e0"/></svg>
<svg class="a" style="left:168.90px;top:398.00px" width="14" height="16" viewBox="0 0 14 16"><rect x="3" y="4" width="1.5" height="8" fill="#c4c8d0"/><polygon points="11,4 5,8 11,12" fill="#c4c8d0"/></svg>
<svg class="a" style="left:215.00px;top:398.00px" width="14" height="16" viewBox="0 0 14 16"><rect x="9.5" y="4" width="1.5" height="8" fill="#c4c8d0"/><polygon points="3,4 9,8 3,12" fill="#c4c8d0"/></svg>
<svg class="a" style="left:184.00px;top:398.00px" width="14" height="16" viewBox="0 0 14 16"><polygon points="7,4 1,8 7,12" fill="#c4c8d0"/><polygon points="13,4 7,8 13,12" fill="#c4c8d0"/></svg>
<svg class="a" style="left:199.90px;top:398.00px" width="14" height="16" viewBox="0 0 14 16"><polygon points="1,4 7,8 1,12" fill="#c4c8d0"/><polygon points="7,4 13,8 7,12" fill="#c4c8d0"/></svg>
<svg class="a" style="left:231.00px;top:398.00px" width="14" height="16" viewBox="0 0 14 16"><line x1="8" y1="10" x2="11.5" y2="15" stroke="#8a8a8a" stroke-width="1.6"/><rect x="2.5" y="1.5" width="7" height="10" rx="3" fill="#bfe3c4" stroke="#5f7f66" stroke-width="1.1"/><rect x="4.5" y="4" width="3" height="5" fill="#2f9f4a"/></svg>
<svg class="a" style="left:245.30px;top:398.00px" width="14" height="16" viewBox="0 0 14 16"><line x1="8.5" y1="9.5" x2="12" y2="15" stroke="#8a8a8a" stroke-width="1.6"/><circle cx="6.5" cy="6.5" r="4.3" fill="#e4f2e4" stroke="#7f8f86" stroke-width="1.1"/><path d="M4,6.5 L9,6.5 M6.5,4 L6.5,9" stroke="#2f9f4a" stroke-width="1.8"/></svg>
<svg class="a" style="left:261.20px;top:398.00px" width="14" height="16" viewBox="0 0 14 16"><line x1="8.5" y1="9.5" x2="12" y2="15" stroke="#8a8a8a" stroke-width="1.6"/><circle cx="6.5" cy="6.5" r="4.3" fill="#e4f2e4" stroke="#7f8f86" stroke-width="1.1"/><path d="M3.8,6.5 L9.2,6.5" stroke="#2f9f4a" stroke-width="2.4"/></svg>
<svg class="a" style="left:277.00px;top:398.00px" width="14" height="16" viewBox="0 0 14 16"><line x1="8.5" y1="10" x2="12" y2="15" stroke="#8a8a8a" stroke-width="1.6"/><ellipse cx="6.5" cy="6.5" rx="3.8" ry="5" fill="#e4f2e4" stroke="#7f8f86" stroke-width="1.1"/><path d="M6.5,3.5 L6.5,9.5 M5,4.5 L6.5,3 L8,4.5 M5,8.5 L6.5,10 L8,8.5" stroke="#2f9f4a" stroke-width="1.3" fill="none"/></svg>
<svg class="a" style="left:292.30px;top:398.00px" width="14" height="16" viewBox="0 0 14 16"><polygon points="6.5,1.5 9,5 8,5 8,7 10,7 10,6 13,8.5 10,11 10,10 8,10 8,12 9,12 6.5,15.5 4,12 5,12 5,10 3,10 3,11 0,8.5 3,6 3,7 5,7 5,5 4,5" fill="#6f9ae0"/></svg>
<svg class="a" style="left:307.20px;top:398.00px" width="14" height="16" viewBox="0 0 14 16"><polygon points="4.5,1 7.5,5 5.5,5 5.5,11 7.5,11 4.5,15 1.5,11 3.5,11 3.5,5 1.5,5" fill="#6f9ae0"/><rect x="9" y="2" width="3.5" height="13" fill="#d6b460" stroke="#b09040" stroke-width="0.5"/></svg>
<svg class="a" style="left:322.20px;top:398.00px" width="14" height="16" viewBox="0 0 14 16"><rect x="1.5" y="2.5" width="11" height="11" fill="#ececf0" stroke="#c8c8d0"/><rect x="5" y="5" width="4" height="6" fill="none" stroke="#d0d0d4" stroke-width="0.8"/></svg>
<svg class="a" style="left:338.00px;top:398.00px" width="14" height="16" viewBox="0 0 14 16"><rect x="1.5" y="1.5" width="11" height="13" fill="#f4f4f4" stroke="#a0a8b4"/><rect x="3" y="3" width="8" height="2" fill="#4a78c8"/><rect x="3" y="6" width="8" height="1.5" fill="#7a9ad8"/><line x1="3" y1="12.5" x2="11" y2="9" stroke="#d84848" stroke-width="1.2"/><line x1="3" y1="9" x2="11" y2="12.5" stroke="#e8a0a0" stroke-width="0.8"/></svg>
<svg class="a" style="left:353.00px;top:398.00px" width="14" height="16" viewBox="0 0 14 16"><rect x="6" y="1" width="2" height="2" fill="#999"/><circle cx="7" cy="9" r="5.2" fill="#f2f2f2" stroke="#9a9a9a" stroke-width="1.1"/><line x1="7" y1="9" x2="7" y2="5.5" stroke="#6a7ab8" stroke-width="1"/></svg>
<svg class="a" style="left:369.00px;top:398.00px" width="14" height="16" viewBox="0 0 14 16"><rect x="3" y="3.5" width="2.8" height="9" fill="#6a8ed0"/><rect x="8" y="3.5" width="2.8" height="9" fill="#6a8ed0"/></svg>
<svg class="a" style="left:384.80px;top:398.00px" width="14" height="16" viewBox="0 0 14 16"><circle cx="7" cy="6.5" r="5" fill="#8ed4f0"/><ellipse cx="6" cy="5" rx="2" ry="1.5" fill="#e8f8ff"/><rect x="1" y="11" width="12" height="4" rx="1" fill="#8a9a88"/><rect x="2" y="12" width="10" height="1.2" fill="#4a8a4a"/></svg>
<svg class="a" style="left:399.90px;top:398.00px" width="14" height="16" viewBox="0 0 14 16"><rect x="2.5" y="3.5" width="10" height="11" fill="#f0f0ec" stroke="#b0b0a8"/><line x1="4" y1="13" x2="11" y2="8" stroke="#d06060" stroke-width="1"/><path d="M1.5,9 Q2,2.5 8,3" stroke="#38a838" stroke-width="2.8" fill="none"/><polygon points="7,0.5 10.5,3 7,5.5" fill="#38a838"/></svg>
<svg class="a" style="left:414.50px;top:397.00px" width="15" height="18.5" viewBox="0 0 15 18.5"><rect x="0.5" y="0.5" width="14" height="17.5" fill="#c4c8d4" stroke="#70747e"/><rect x="7" y="1.5" width="1.5" height="16" fill="#d8b860"/><circle cx="5.5" cy="6.5" r="2.8" fill="#3f72c0"/><circle cx="9.5" cy="12.5" r="2.8" fill="#3f72c0"/></svg>
<svg class="a" style="left:430.80px;top:398.00px" width="14" height="16" viewBox="0 0 14 16"><path d="M4.5,2.5 L2.5,2.5 L2.5,13.5 L4.5,13.5 M9.5,2.5 L11.5,2.5 L11.5,13.5 L9.5,13.5" stroke="#d0a050" stroke-width="1.8" fill="none"/><path d="M4.5,11 L4.5,5 L9.5,11 L9.5,5" stroke="#d83080" stroke-width="1.2" fill="none"/></svg>
<svg class="a" style="left:445.80px;top:398.00px" width="14" height="16" viewBox="0 0 14 16"><path d="M4,13 Q6,3 9,3 M7,8 L12,13 M12,8 L7,13" stroke="#c8c8d0" stroke-width="1.2" fill="none"/></svg>
<div class="a" style="left:12.60px;top:651.50px;width:87.60px;height:20.50px;background:linear-gradient(#f8f8f8,#e6e6e6 60%,#dadada);border:1px solid #b4b4b4;box-sizing:border-box;border-radius:2px;"></div>
<div class="t" style="left:30.15px;top:654.47px;width:52.50px;height:15.6px;line-height:15.6px;font-size:13px;font-weight:bold;color:#1a1a1a;"><span style="transform:scaleX(0.7518)">OVERVIEW</span></div>
<div class="a" style="left:104.00px;top:651.50px;width:90.60px;height:20.50px;background:linear-gradient(#9ff4fb,#1ed8ec 40%,#10d0e8);border:1px solid #5ab8c8;box-sizing:border-box;border-radius:2px;"></div>
<div class="t" style="left:117.80px;top:654.47px;width:63.00px;height:15.6px;line-height:15.6px;font-size:13px;font-weight:bold;color:#1a1a1a;"><span style="transform:scaleX(0.7563)">EWS STATUS</span></div>
<div class="a" style="left:197.70px;top:651.50px;width:88.30px;height:20.50px;background:linear-gradient(#f8f8f8,#e6e6e6 60%,#dadada);border:1px solid #b4b4b4;box-sizing:border-box;border-radius:2px;"></div>
<div class="t" style="left:199.60px;top:654.47px;width:84.50px;height:15.6px;line-height:15.6px;font-size:13px;font-weight:bold;color:#1a1a1a;"><span style="transform:scaleX(0.7208)">ALARM SUMMARY</span></div>
<div class="a" style="left:291.00px;top:651.50px;width:88.00px;height:20.50px;background:linear-gradient(#f8f8f8,#e6e6e6 60%,#dadada);border:1px solid #b4b4b4;box-sizing:border-box;border-radius:2px;"></div>
<div class="t" style="left:310.70px;top:654.47px;width:48.60px;height:15.6px;line-height:15.6px;font-size:13px;font-weight:bold;color:#1a1a1a;"><span style="transform:scaleX(0.7159)">TRENDING</span></div>
<div class="a" style="left:384.70px;top:651.50px;width:87.90px;height:20.50px;background:linear-gradient(#f8f8f8,#e6e6e6 60%,#dadada);border:1px solid #b4b4b4;box-sizing:border-box;border-radius:2px;"></div>
<div class="t" style="left:393.30px;top:654.47px;width:70.70px;height:15.6px;line-height:15.6px;font-size:13px;font-weight:bold;color:#1a1a1a;"><span style="transform:scaleX(0.7360)">INPUT/OUTPUT</span></div>
<div class="a" style="left:477.70px;top:651.50px;width:88.80px;height:20.50px;background:linear-gradient(#f8f8f8,#e6e6e6 60%,#dadada);border:1px solid #b4b4b4;box-sizing:border-box;border-radius:2px;"></div>
<div class="t" style="left:494.10px;top:654.47px;width:56.00px;height:15.6px;line-height:15.6px;font-size:13px;font-weight:bold;color:#1a1a1a;"><span style="transform:scaleX(0.7385)">INTERLOCK</span></div>
<div class="a" style="left:688.60px;top:651.50px;width:87.60px;height:20.50px;background:linear-gradient(#f8f8f8,#e6e6e6 60%,#dadada);border:1px solid #b4b4b4;box-sizing:border-box;border-radius:2px;"></div>
<div class="t" style="left:703.70px;top:654.47px;width:57.40px;height:15.6px;line-height:15.6px;font-size:13px;font-weight:bold;color:#1a1a1a;"><span style="transform:scaleX(0.7359)">SILENT/ACK</span></div>
<div class="a" style="left:781.00px;top:651.50px;width:88.00px;height:20.50px;background:linear-gradient(#f8f8f8,#e6e6e6 60%,#dadada);border:1px solid #b4b4b4;box-sizing:border-box;border-radius:2px;"></div>
<div class="t" style="left:790.00px;top:654.47px;width:70.00px;height:15.6px;line-height:15.6px;font-size:13px;font-weight:bold;color:#1a1a1a;"><span style="transform:scaleX(0.7494)">RESET ALARM</span></div>
<div class="a" style="left:886.40px;top:653.80px;width:123.40px;height:18.20px;background:#000;"></div>
<div class="t" style="left:889.10px;top:653.36px;width:118.00px;height:19.2px;line-height:19.2px;font-size:16px;font-weight:normal;color:#f0f0f0;"><span style="transform:scaleX(0.7093)">10/30/2018 4:34:28 PM</span></div>
</div></body></html>
